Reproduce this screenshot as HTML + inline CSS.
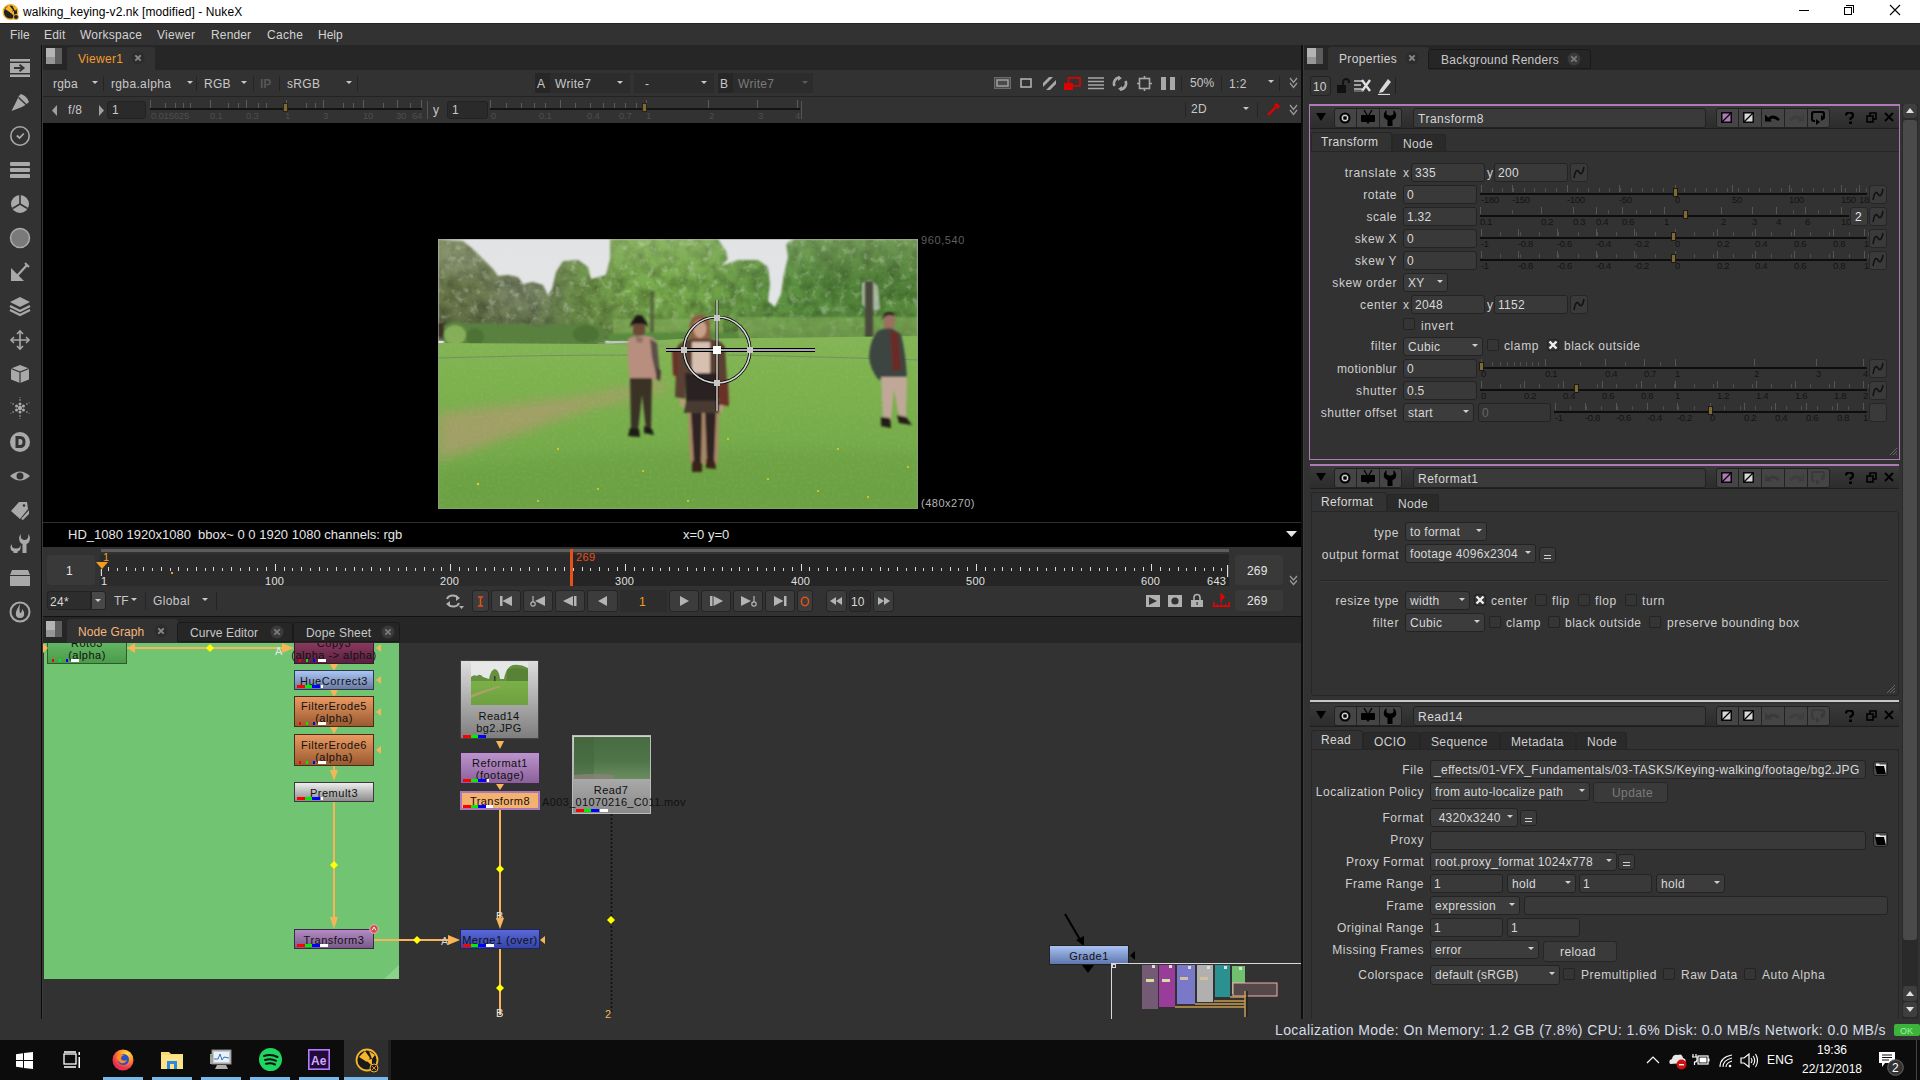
<!DOCTYPE html>
<html><head><meta charset="utf-8">
<style>
*{margin:0;padding:0;box-sizing:border-box}
html,body{width:1920px;height:1080px;overflow:hidden;background:#323232;font-family:"Liberation Sans",sans-serif;font-size:12px;color:#c8c8c8;position:relative}
.a{position:absolute}
.t{position:absolute;white-space:nowrap}
</style></head><body>
<div class="a" style="left:0px;top:0px;width:1920px;height:23px;background:#ffffff;"></div>
<svg class="a" style="left:2px;top:2px;" width="17" height="18" viewBox="0 0 17 18"><circle cx="8.5" cy="10" r="7.3" fill="#222" stroke="#f5b52e" stroke-width="1.4"/><path d="M3 7 L7 3 L11 8 L9 11 Z" fill="#f5b52e"/><path d="M10 3 L15 6 L13 9 Z" fill="#f5b52e"/><path d="M8 10 L12 9 L12 14 Z" fill="#f5b52e"/><circle cx="14" cy="15" r="2.5" fill="#222" stroke="#f5b52e" stroke-width="1"/></svg>
<div class="t" style="left:23px;top:6px;font-size:12px;line-height:12px;color:#000;letter-spacing:0.08px;">walking_keying-v2.nk [modified] - NukeX</div>
<div class="a" style="left:1799px;top:10px;width:10px;height:1px;background:#000;"></div>
<div class="a" style="left:1844px;top:7px;width:8px;height:8px;background:none;border:1px solid #000"></div>
<div class="a" style="left:1846px;top:5px;width:8px;height:8px;background:none;border-top:1px solid #000;border-right:1px solid #000"></div>
<svg class="a" style="left:1889px;top:4px;" width="12" height="12" viewBox="0 0 12 12"><path d="M1 1 L11 11 M11 1 L1 11" stroke="#000" stroke-width="1.1"/></svg>
<div class="a" style="left:0px;top:23px;width:1920px;height:22px;background:#323232;"></div>
<div class="a" style="left:0px;top:23px;width:1920px;height:1px;background:#232323;"></div>
<div class="t" style="left:10px;top:29px;font-size:12px;line-height:12px;color:#d2d2d2;letter-spacing:0.1px;">File</div>
<div class="t" style="left:44px;top:29px;font-size:12px;line-height:12px;color:#d2d2d2;letter-spacing:0.2px;">Edit</div>
<div class="t" style="left:80px;top:29px;font-size:12px;line-height:12px;color:#d2d2d2;letter-spacing:0.25px;">Workspace</div>
<div class="t" style="left:157px;top:29px;font-size:12px;line-height:12px;color:#d2d2d2;letter-spacing:0.3px;">Viewer</div>
<div class="t" style="left:211px;top:29px;font-size:12px;line-height:12px;color:#d2d2d2;letter-spacing:0.15px;">Render</div>
<div class="t" style="left:267px;top:29px;font-size:12px;line-height:12px;color:#d2d2d2;letter-spacing:0.3px;">Cache</div>
<div class="t" style="left:318px;top:29px;font-size:12px;line-height:12px;color:#d2d2d2;letter-spacing:0px;">Help</div>
<div class="a" style="left:0px;top:45px;width:41px;height:974px;background:#323232;"></div>
<div class="a" style="left:41px;top:45px;width:1px;height:974px;background:#0a0a0a;"></div>
<div class="a" style="left:42px;top:45px;width:1px;height:974px;background:#3a3a3a;"></div>
<svg class="a" style="left:8px;top:56px;" width="24" height="24" viewBox="0 0 24 24"><rect x="2" y="3" width="20" height="2.5" fill="#a9a9a9"/><rect x="2" y="7" width="20" height="10" fill="#a9a9a9"/><rect x="2" y="18.5" width="20" height="2.5" fill="#a9a9a9"/><path d="M6 12 H15 M11.5 8.8 L15.5 12 L11.5 15.2" stroke="#333" stroke-width="2" fill="none"/></svg>
<svg class="a" style="left:8px;top:90px;" width="24" height="24" viewBox="0 0 24 24"><path d="M3.5 21 L9 10 Q11 5 13 4 Q19 6 21 12 Q18 15 14 17 Z" fill="#a9a9a9"/><path d="M10.5 7.5 L18.5 15" stroke="#333" stroke-width="1.4"/></svg>
<svg class="a" style="left:8px;top:124px;" width="24" height="24" viewBox="0 0 24 24"><circle cx="12" cy="12" r="9.2" fill="none" stroke="#a9a9a9" stroke-width="1.6"/><path d="M8.8 11.5 L11.5 14 L15.8 9.5" stroke="#a9a9a9" stroke-width="1.8" fill="none"/></svg>
<svg class="a" style="left:8px;top:158px;" width="24" height="24" viewBox="0 0 24 24"><rect x="2" y="4" width="20" height="4" rx="1" fill="#a9a9a9"/><rect x="2" y="10" width="20" height="4" rx="1" fill="#a9a9a9"/><rect x="2" y="16" width="20" height="4" rx="1" fill="#a9a9a9"/></svg>
<svg class="a" style="left:8px;top:192px;" width="24" height="24" viewBox="0 0 24 24"><circle cx="12" cy="12" r="9" fill="#a9a9a9"/><path d="M12 3 V12 L4.5 16.5 M12 12 L19.5 16.5" stroke="#333" stroke-width="1.6" fill="none"/></svg>
<svg class="a" style="left:8px;top:226px;" width="24" height="24" viewBox="0 0 24 24"><circle cx="12" cy="12" r="9.5" fill="#7a7a7a" stroke="#a9a9a9" stroke-width="1.5"/></svg>
<svg class="a" style="left:8px;top:260px;" width="24" height="24" viewBox="0 0 24 24"><path d="M3 21 L3 8 L16 21 Z" fill="#a9a9a9"/><path d="M8 17 L19 5" stroke="#a9a9a9" stroke-width="2.2"/><path d="M17 3 L21 7" stroke="#a9a9a9" stroke-width="2"/></svg>
<svg class="a" style="left:8px;top:294px;" width="24" height="24" viewBox="0 0 24 24"><path d="M2 8 L12 3 L22 8 L12 13 Z" fill="#a9a9a9"/><path d="M2 12 L12 17 L22 12" stroke="#a9a9a9" stroke-width="2.2" fill="none"/><path d="M2 16 L12 21 L22 16" stroke="#a9a9a9" stroke-width="2.2" fill="none"/></svg>
<svg class="a" style="left:8px;top:328px;" width="24" height="24" viewBox="0 0 24 24"><path d="M12 3 V21 M3 12 H21" stroke="#a9a9a9" stroke-width="1.6"/><path d="M9 6 L12 3 L15 6 M9 18 L12 21 L15 18 M6 9 L3 12 L6 15 M18 9 L21 12 L18 15" stroke="#a9a9a9" stroke-width="1.6" fill="none"/></svg>
<svg class="a" style="left:8px;top:362px;" width="24" height="24" viewBox="0 0 24 24"><path d="M3 6.5 L12 3 L21 6.5 L21 17.5 L12 21 L3 17.5 Z" fill="#a9a9a9"/><path d="M3 6.5 L12 10 L21 6.5 M12 10 V21" stroke="#333" stroke-width="1.2" fill="none"/></svg>
<svg class="a" style="left:8px;top:396px;" width="24" height="24" viewBox="0 0 24 24"><circle cx="12" cy="12" r="2.2" fill="#a9a9a9"/><circle cx="12.00" cy="16.00" r="1.5" fill="#a9a9a9"/><circle cx="12.00" cy="20.00" r="0.8" fill="#a9a9a9"/><circle cx="12.00" cy="22.50" r="0.6" fill="#a9a9a9" opacity="0.7"/><circle cx="8.54" cy="14.00" r="1.5" fill="#a9a9a9"/><circle cx="5.07" cy="16.00" r="0.8" fill="#a9a9a9"/><circle cx="2.91" cy="17.25" r="0.6" fill="#a9a9a9" opacity="0.7"/><circle cx="8.54" cy="10.00" r="1.5" fill="#a9a9a9"/><circle cx="5.07" cy="8.00" r="0.8" fill="#a9a9a9"/><circle cx="2.91" cy="6.75" r="0.6" fill="#a9a9a9" opacity="0.7"/><circle cx="12.00" cy="8.00" r="1.5" fill="#a9a9a9"/><circle cx="12.00" cy="4.00" r="0.8" fill="#a9a9a9"/><circle cx="12.00" cy="1.50" r="0.6" fill="#a9a9a9" opacity="0.7"/><circle cx="15.46" cy="10.00" r="1.5" fill="#a9a9a9"/><circle cx="18.93" cy="8.00" r="0.8" fill="#a9a9a9"/><circle cx="21.09" cy="6.75" r="0.6" fill="#a9a9a9" opacity="0.7"/><circle cx="15.46" cy="14.00" r="1.5" fill="#a9a9a9"/><circle cx="18.93" cy="16.00" r="0.8" fill="#a9a9a9"/><circle cx="21.09" cy="17.25" r="0.6" fill="#a9a9a9" opacity="0.7"/></svg>
<svg class="a" style="left:8px;top:430px;" width="24" height="24" viewBox="0 0 24 24"><circle cx="12" cy="12" r="10" fill="#a9a9a9"/><path d="M7.5 6 H12 Q17.5 6 17.5 12 Q17.5 18 12 18 H7.5 Z" fill="#333"/><path d="M10.5 9 H12 Q14.5 9 14.5 12 Q14.5 15 12 15 H10.5 Z" fill="#a9a9a9"/></svg>
<svg class="a" style="left:8px;top:464px;" width="24" height="24" viewBox="0 0 24 24"><path d="M2 12 Q12 3 22 12 Q12 21 2 12 Z" fill="#a9a9a9"/><circle cx="12" cy="12" r="3.5" fill="#333"/></svg>
<svg class="a" style="left:8px;top:498px;" width="24" height="24" viewBox="0 0 24 24"><path d="M3 13 L11 4 L19 4 L20 11 L12 21 Z" fill="#a9a9a9"/><path d="M13 21 L21 12 L21 16 L15 22 Z" fill="#a9a9a9"/><circle cx="16" cy="7.5" r="1.3" fill="#333"/></svg>
<svg class="a" style="left:8px;top:532px;" width="24" height="24" viewBox="0 0 24 24"><path d="M12.5 2 Q10 6 12 10 Q13.5 12 14.5 12 L14.5 21 L18.5 21 L18.5 12 Q19.5 12 21 10 Q23 6 20.5 2 L20 6 Q19 8 16.5 8 Q14 8 13 6 Z" fill="#a9a9a9"/><path d="M3.5 12 Q1.5 15 3 18 Q4 19 5.5 19.5 L5.5 21 L9.5 21 L9.5 19.5 Q11 19 12 18 Q13 16 12.5 13 L11.5 15.5 Q10.5 16.5 8 16.5 Q5 16.5 4.2 15 Z" fill="#a9a9a9"/></svg>
<svg class="a" style="left:8px;top:566px;" width="24" height="24" viewBox="0 0 24 24"><path d="M4 4 H20 L22 9 H2 Z" fill="#a9a9a9"/><rect x="2" y="10" width="20" height="10" fill="#a9a9a9"/></svg>
<svg class="a" style="left:8px;top:600px;" width="24" height="24" viewBox="0 0 24 24"><circle cx="12" cy="12" r="9.5" fill="none" stroke="#a9a9a9" stroke-width="2"/><path d="M12 4 Q9 9 8 12 Q7 18 12 18 Q17 18 16 12 Q15 10 14 9 Q14 13 12 13 Q11 10 12 4 Z" fill="#a9a9a9"/></svg>
<div class="a" style="left:43px;top:45px;width:1258px;height:25px;background:#262626;"></div>
<div class="a" style="left:46px;top:48px;width:9px;height:9px;background:#b4b4b4;"></div>
<div class="a" style="left:46px;top:57px;width:9px;height:7px;background:#969696;"></div>
<div class="a" style="left:55px;top:48px;width:7px;height:16px;background:#5c5c5c;"></div>
<div class="a" style="left:67px;top:47px;width:88px;height:23px;background:#323232;border-radius:3px 3px 0 0"></div>
<div class="t" style="left:78px;top:53px;font-size:12px;line-height:12px;color:#f39c2b;letter-spacing:0.3px;">Viewer1</div>
<svg class="a" style="left:131px;top:51px;" width="14" height="14" viewBox="0 0 14 14"><circle cx="7" cy="7" r="6.5" fill="#2c2c2c"/><path d="M4.3 4.3 L9.7 9.7 M9.7 4.3 L4.3 9.7" stroke="#8a8a8a" stroke-width="1.8"/></svg>
<div class="a" style="left:43px;top:70px;width:1258px;height:26px;background:#323232;"></div>
<div class="a" style="left:43px;top:96px;width:1258px;height:1px;background:#232323;"></div>
<div class="t" style="left:53px;top:78px;font-size:12px;line-height:12px;color:#c8c8c8;letter-spacing:0.2px;">rgba</div>
<svg class="a" style="left:92px;top:81px;" width="6" height="3" viewBox="0 0 6 3"><path d="M0 0 H6 L3.0 3 Z" fill="#c8c8c8"/></svg>
<div class="a" style="left:103px;top:76px;width:1px;height:15px;background:#242424;"></div>
<div class="t" style="left:111px;top:78px;font-size:12px;line-height:12px;color:#c8c8c8;letter-spacing:0.35px;">rgba.alpha</div>
<svg class="a" style="left:187px;top:81px;" width="6" height="3" viewBox="0 0 6 3"><path d="M0 0 H6 L3.0 3 Z" fill="#c8c8c8"/></svg>
<div class="a" style="left:196px;top:76px;width:1px;height:15px;background:#242424;"></div>
<div class="t" style="left:204px;top:78px;font-size:12px;line-height:12px;color:#c8c8c8;letter-spacing:0.3px;">RGB</div>
<svg class="a" style="left:241px;top:81px;" width="6" height="3" viewBox="0 0 6 3"><path d="M0 0 H6 L3.0 3 Z" fill="#c8c8c8"/></svg>
<div class="a" style="left:253px;top:76px;width:1px;height:15px;background:#242424;"></div>
<div class="t" style="left:260px;top:78px;font-size:12px;line-height:12px;color:#555555;letter-spacing:0px;font-weight:bold;">IP</div>
<div class="a" style="left:279px;top:76px;width:1px;height:15px;background:#242424;"></div>
<div class="t" style="left:287px;top:78px;font-size:12px;line-height:12px;color:#c8c8c8;letter-spacing:0.3px;">sRGB</div>
<svg class="a" style="left:346px;top:81px;" width="6" height="3" viewBox="0 0 6 3"><path d="M0 0 H6 L3.0 3 Z" fill="#c8c8c8"/></svg>
<div class="a" style="left:357px;top:76px;width:1px;height:15px;background:#242424;"></div>
<div class="a" style="left:535px;top:73px;width:15px;height:20px;background:#262626;"></div>
<div class="t" style="left:537px;top:78px;font-size:12px;line-height:12px;color:#c8c8c8;letter-spacing:0px;">A</div>
<div class="a" style="left:550px;top:73px;width:80px;height:20px;background:#2c2c2c;"></div>
<div class="t" style="left:555px;top:78px;font-size:12px;line-height:12px;color:#c8c8c8;letter-spacing:0.3px;">Write7</div>
<svg class="a" style="left:617px;top:81px;" width="6" height="3" viewBox="0 0 6 3"><path d="M0 0 H6 L3.0 3 Z" fill="#c8c8c8"/></svg>
<div class="a" style="left:634px;top:73px;width:80px;height:20px;background:#2c2c2c;"></div>
<div class="t" style="left:645px;top:78px;font-size:12px;line-height:12px;color:#c8c8c8;letter-spacing:0px;">-</div>
<svg class="a" style="left:701px;top:81px;" width="6" height="3" viewBox="0 0 6 3"><path d="M0 0 H6 L3.0 3 Z" fill="#c8c8c8"/></svg>
<div class="a" style="left:718px;top:73px;width:15px;height:20px;background:#262626;"></div>
<div class="t" style="left:720px;top:78px;font-size:12px;line-height:12px;color:#c8c8c8;letter-spacing:0px;">B</div>
<div class="a" style="left:733px;top:73px;width:80px;height:20px;background:#2c2c2c;"></div>
<div class="t" style="left:738px;top:78px;font-size:12px;line-height:12px;color:#7a7a7a;letter-spacing:0.3px;">Write7</div>
<svg class="a" style="left:802px;top:81px;" width="6" height="3" viewBox="0 0 6 3"><path d="M0 0 H6 L3.0 3 Z" fill="#5a5a5a"/></svg>
<svg class="a" style="left:994px;top:77px;" width="17" height="12" viewBox="0 0 17 12"><rect x="0.5" y="0.5" width="16" height="11" fill="#4a4a4a" stroke="#6a6a6a"/><rect x="3" y="3" width="11" height="6" fill="none" stroke="#a0a0a0" stroke-width="1.5"/></svg>
<svg class="a" style="left:1020px;top:78px;" width="12" height="10" viewBox="0 0 12 10"><rect x="1" y="1" width="10" height="8" fill="none" stroke="#b0b0b0" stroke-width="1.6"/></svg>
<svg class="a" style="left:1043px;top:77px;" width="14" height="13" viewBox="0 0 14 13"><path d="M0 6 L6 0 L10 0 L0 10 Z M3 13 L13 3 L13 7 L7 13 Z" fill="#a8a8a8"/></svg>
<svg class="a" style="left:1064px;top:77px;" width="17" height="13" viewBox="0 0 17 13"><rect x="4.5" y="0.8" width="11.5" height="8" fill="none" stroke="#e00000" stroke-width="1.6"/><rect x="0" y="6" width="9" height="7" fill="#e00000"/></svg>
<svg class="a" style="left:1088px;top:77px;" width="16" height="13" viewBox="0 0 16 13"><path d="M0 1 H16 M0 4.5 H16 M0 8 H16 M0 11.5 H16" stroke="#a8a8a8" stroke-width="1.6"/></svg>
<svg class="a" style="left:1112px;top:76px;" width="16" height="15" viewBox="0 0 16 15"><path d="M8 1.5 A6 6 0 0 0 2.5 10 M8 13.5 A6 6 0 0 0 13.5 5" stroke="#a8a8a8" stroke-width="2.6" fill="none"/><path d="M6 0 L10 2 L6 5 Z M10 15 L6 13 L10 10 Z" fill="#a8a8a8"/></svg>
<svg class="a" style="left:1137px;top:76px;" width="15" height="15" viewBox="0 0 15 15"><rect x="2.5" y="2.5" width="10" height="10" fill="none" stroke="#a8a8a8" stroke-width="1.6"/><path d="M7.5 0 V3 M7.5 12 V15 M0 7.5 H3 M12 7.5 H15" stroke="#a8a8a8" stroke-width="1.6"/></svg>
<div class="a" style="left:1161px;top:77px;width:5px;height:13px;background:#a8a8a8;"></div>
<div class="a" style="left:1170px;top:77px;width:5px;height:13px;background:#a8a8a8;"></div>
<div class="a" style="left:1181px;top:76px;width:1px;height:15px;background:#242424;"></div>
<div class="t" style="left:1190px;top:77px;font-size:12px;line-height:12px;color:#c8c8c8;letter-spacing:0.1px;">50%</div>
<div class="a" style="left:1221px;top:76px;width:1px;height:15px;background:#242424;"></div>
<div class="t" style="left:1229px;top:78px;font-size:12px;line-height:12px;color:#c8c8c8;letter-spacing:0.4px;">1:2</div>
<svg class="a" style="left:1268px;top:80px;" width="6" height="3" viewBox="0 0 6 3"><path d="M0 0 H6 L3.0 3 Z" fill="#c8c8c8"/></svg>
<div class="a" style="left:1279px;top:76px;width:1px;height:15px;background:#242424;"></div>
<svg class="a" style="left:1289px;top:77px;" width="9" height="13" viewBox="0 0 9 13"><path d="M1 1 L4.5 5.5 L8 1 M1 6 L4.5 10.5 L8 6" stroke="#9a9a9a" stroke-width="1.3" fill="none"/></svg>
<div class="a" style="left:43px;top:97px;width:1258px;height:26px;background:#323232;"></div>
<svg class="a" style="left:52px;top:105px;" width="5" height="11" viewBox="0 0 5 11"><path d="M5 0 V11 L0 5.5 Z" fill="#a0a0a0"/></svg>
<div class="t" style="left:68px;top:104px;font-size:12px;line-height:12px;color:#c8c8c8;letter-spacing:0.3px;">f/8</div>
<svg class="a" style="left:99px;top:105px;" width="5" height="11" viewBox="0 0 5 11"><path d="M0 0 V11 L5 5.5 Z" fill="#a0a0a0"/></svg>
<div class="a" style="left:107px;top:101px;width:39px;height:18px;background:#2a2a2a;border:1px solid #222;border-radius:3px"></div>
<div class="t" style="left:112px;top:104px;font-size:12px;line-height:12px;color:#c8c8c8;letter-spacing:0px;">1</div>
<div class="a" style="left:150px;top:108px;width:272px;height:2px;background:#141414;"></div>
<svg class="a" style="left:150px;top:100px;" width="273" height="8" viewBox="0 0 273 8"><rect x="0" y="0" width="1" height="8" fill="#5a5a5a"/><rect x="15" y="3" width="1" height="5" fill="#5a5a5a"/><rect x="25" y="3" width="1" height="5" fill="#5a5a5a"/><rect x="33" y="3" width="1" height="5" fill="#5a5a5a"/><rect x="40" y="3" width="1" height="5" fill="#5a5a5a"/><rect x="60" y="0" width="1" height="8" fill="#5a5a5a"/><rect x="78" y="3" width="1" height="5" fill="#5a5a5a"/><rect x="88" y="3" width="1" height="5" fill="#5a5a5a"/><rect x="96" y="0" width="1" height="8" fill="#5a5a5a"/><rect x="108" y="3" width="1" height="5" fill="#5a5a5a"/><rect x="116" y="3" width="1" height="5" fill="#5a5a5a"/><rect x="136" y="0" width="1" height="8" fill="#5a5a5a"/><rect x="156" y="3" width="1" height="5" fill="#5a5a5a"/><rect x="165" y="3" width="1" height="5" fill="#5a5a5a"/><rect x="173" y="0" width="1" height="8" fill="#5a5a5a"/><rect x="193" y="3" width="1" height="5" fill="#5a5a5a"/><rect x="203" y="3" width="1" height="5" fill="#5a5a5a"/><rect x="213" y="0" width="1" height="8" fill="#5a5a5a"/><rect x="233" y="3" width="1" height="5" fill="#5a5a5a"/><rect x="247" y="0" width="1" height="8" fill="#5a5a5a"/><rect x="260" y="3" width="1" height="5" fill="#5a5a5a"/><rect x="271" y="0" width="1" height="8" fill="#5a5a5a"/></svg>
<div class="t" style="left:151px;top:111px;font-size:9.5px;line-height:9.5px;color:#4e4e4e;letter-spacing:-0.2px;">0.015625</div>
<div class="t" style="left:210px;top:111px;font-size:9.5px;line-height:9.5px;color:#4e4e4e;letter-spacing:-0.2px;">0.1</div>
<div class="t" style="left:246px;top:111px;font-size:9.5px;line-height:9.5px;color:#4e4e4e;letter-spacing:-0.2px;">0.3</div>
<div class="t" style="left:285px;top:111px;font-size:9.5px;line-height:9.5px;color:#4e4e4e;letter-spacing:-0.2px;">1</div>
<div class="t" style="left:323px;top:111px;font-size:9.5px;line-height:9.5px;color:#4e4e4e;letter-spacing:-0.2px;">3</div>
<div class="t" style="left:363px;top:111px;font-size:9.5px;line-height:9.5px;color:#4e4e4e;letter-spacing:-0.2px;">10</div>
<div class="t" style="left:396px;top:111px;font-size:9.5px;line-height:9.5px;color:#4e4e4e;letter-spacing:-0.2px;">30</div>
<div class="t" style="left:412px;top:111px;font-size:9.5px;line-height:9.5px;color:#4e4e4e;letter-spacing:-0.2px;">64</div>
<div class="a" style="left:283px;top:103px;width:5px;height:9px;background:#7d6a35;border:1px solid #2a2416"></div>
<div class="a" style="left:427px;top:101px;width:1px;height:18px;background:#555;"></div>
<div class="t" style="left:433px;top:104px;font-size:12px;line-height:12px;color:#c8c8c8;letter-spacing:0px;">y</div>
<div class="a" style="left:447px;top:101px;width:41px;height:18px;background:#2a2a2a;border:1px solid #222;border-radius:3px"></div>
<div class="t" style="left:452px;top:104px;font-size:12px;line-height:12px;color:#c8c8c8;letter-spacing:0px;">1</div>
<div class="a" style="left:490px;top:108px;width:310px;height:2px;background:#141414;"></div>
<svg class="a" style="left:490px;top:100px;" width="311" height="8" viewBox="0 0 311 8"><rect x="0" y="0" width="1" height="8" fill="#5a5a5a"/><rect x="16" y="3" width="1" height="5" fill="#5a5a5a"/><rect x="31" y="3" width="1" height="5" fill="#5a5a5a"/><rect x="44" y="3" width="1" height="5" fill="#5a5a5a"/><rect x="55" y="3" width="1" height="5" fill="#5a5a5a"/><rect x="70" y="0" width="1" height="8" fill="#5a5a5a"/><rect x="85" y="3" width="1" height="5" fill="#5a5a5a"/><rect x="100" y="3" width="1" height="5" fill="#5a5a5a"/><rect x="113" y="3" width="1" height="5" fill="#5a5a5a"/><rect x="124" y="3" width="1" height="5" fill="#5a5a5a"/><rect x="135" y="3" width="1" height="5" fill="#5a5a5a"/><rect x="146" y="3" width="1" height="5" fill="#5a5a5a"/><rect x="156" y="0" width="1" height="8" fill="#5a5a5a"/><rect x="218" y="0" width="1" height="8" fill="#5a5a5a"/><rect x="267" y="0" width="1" height="8" fill="#5a5a5a"/><rect x="307" y="0" width="1" height="8" fill="#5a5a5a"/></svg>
<div class="t" style="left:491px;top:111px;font-size:9.5px;line-height:9.5px;color:#4e4e4e;letter-spacing:-0.2px;">0</div>
<div class="t" style="left:539px;top:111px;font-size:9.5px;line-height:9.5px;color:#4e4e4e;letter-spacing:-0.2px;">0.1</div>
<div class="t" style="left:587px;top:111px;font-size:9.5px;line-height:9.5px;color:#4e4e4e;letter-spacing:-0.2px;">0.4</div>
<div class="t" style="left:619px;top:111px;font-size:9.5px;line-height:9.5px;color:#4e4e4e;letter-spacing:-0.2px;">0.7</div>
<div class="t" style="left:646px;top:111px;font-size:9.5px;line-height:9.5px;color:#4e4e4e;letter-spacing:-0.2px;">1</div>
<div class="t" style="left:709px;top:111px;font-size:9.5px;line-height:9.5px;color:#4e4e4e;letter-spacing:-0.2px;">2</div>
<div class="t" style="left:758px;top:111px;font-size:9.5px;line-height:9.5px;color:#4e4e4e;letter-spacing:-0.2px;">3</div>
<div class="t" style="left:795px;top:111px;font-size:9.5px;line-height:9.5px;color:#4e4e4e;letter-spacing:-0.2px;">4</div>
<div class="a" style="left:642px;top:103px;width:5px;height:9px;background:#7d6a35;border:1px solid #2a2416"></div>
<div class="a" style="left:801px;top:101px;width:1px;height:18px;background:#555;"></div>
<div class="a" style="left:1185px;top:102px;width:1px;height:15px;background:#242424;"></div>
<div class="t" style="left:1191px;top:103px;font-size:12px;line-height:12px;color:#c8c8c8;letter-spacing:0.3px;">2D</div>
<svg class="a" style="left:1243px;top:107px;" width="6" height="3" viewBox="0 0 6 3"><path d="M0 0 H6 L3.0 3 Z" fill="#c8c8c8"/></svg>
<div class="a" style="left:1257px;top:102px;width:1px;height:15px;background:#242424;"></div>
<svg class="a" style="left:1267px;top:103px;" width="13" height="13" viewBox="0 0 13 13"><path d="M1 12 L9 4" stroke="#e00000" stroke-width="2.4"/><path d="M7 2 L11 6 L13 3 L10 0 Z" fill="#e00000"/></svg>
<svg class="a" style="left:1289px;top:104px;" width="9" height="13" viewBox="0 0 9 13"><path d="M1 1 L4.5 5.5 L8 1 M1 6 L4.5 10.5 L8 6" stroke="#9a9a9a" stroke-width="1.3" fill="none"/></svg>
<div class="a" style="left:43px;top:123px;width:1258px;height:424px;background:#000000;"></div>
<div class="a" style="left:43px;top:522px;width:1258px;height:1px;background:#2e2e2e;"></div>
<svg class="a" style="left:438px;top:239px;" width="480" height="270" viewBox="0 0 480 270"><defs>
<filter id="b1" x="-5%" y="-5%" width="110%" height="110%"><feGaussianBlur stdDeviation="1.2"/></filter>
<filter id="b2" x="-20%" y="-20%" width="140%" height="140%"><feGaussianBlur stdDeviation="1"/></filter>
<filter id="b3" x="-50%" y="-50%" width="200%" height="200%"><feGaussianBlur stdDeviation="6"/></filter>
<filter id="tex" x="0" y="0" width="100%" height="100%"><feTurbulence type="fractalNoise" baseFrequency="0.08" numOctaves="3" seed="3"/><feColorMatrix type="matrix" values="0 0 0 0 0  0 0 0 0 0  0 0 0 0 0  0 0 0 -1.6 1.05"/></filter>
<filter id="tex2" x="0" y="0" width="100%" height="100%"><feTurbulence type="fractalNoise" baseFrequency="0.35" numOctaves="1" seed="7"/><feColorMatrix type="matrix" values="0 0 0 0 1  0 0 0 0 1  0 0 0 0 0.8  0 0 0 -1.2 0.62"/></filter>
<filter id="tex3" x="0" y="0" width="100%" height="100%"><feTurbulence type="fractalNoise" baseFrequency="0.12" numOctaves="3" seed="11"/><feColorMatrix type="matrix" values="0 0 0 0 0.86  0 0 0 0 0.88  0 0 0 0 0.84  0 0 0 2.4 -1.3"/></filter>
<linearGradient id="tshade" x1="0" y1="0" x2="0" y2="1"><stop offset="0" stop-color="#c8d8a8" stop-opacity="0.25"/><stop offset="0.45" stop-color="#c8d8a8" stop-opacity="0"/><stop offset="0.7" stop-color="#1a2a10" stop-opacity="0"/><stop offset="1" stop-color="#1a2a10" stop-opacity="0.3"/></linearGradient>
<linearGradient id="sky" x1="0" y1="0" x2="0" y2="1"><stop offset="0" stop-color="#e2e3e5"/><stop offset="1" stop-color="#e8e9ea"/></linearGradient>
<linearGradient id="trees" x1="0" y1="0" x2="1" y2="0"><stop offset="0" stop-color="#667446"/><stop offset="0.2" stop-color="#72825a"/><stop offset="0.3" stop-color="#6c9048"/><stop offset="0.45" stop-color="#78a84c"/><stop offset="0.6" stop-color="#6a9c46"/><stop offset="0.75" stop-color="#5a8e40"/><stop offset="1" stop-color="#5a8c3e"/></linearGradient>
<linearGradient id="grass" x1="0" y1="0" x2="0" y2="1"><stop offset="0" stop-color="#84b456"/><stop offset="0.25" stop-color="#7db24e"/><stop offset="1" stop-color="#6ea446"/></linearGradient>
<mask id="tc" maskUnits="userSpaceOnUse" x="0" y="0" width="480" height="270"><path filter="url(#b1)" fill="#fff" d="M0 0 L25 2 L35 10 L45 20 L55 30 L60 37 L70 36 L80 38 L85 45 L95 43 L105 46 L110 56 L114 50 L118 33 L125 22 L140 21 L150 28 L153 40 L160 38 L168 36 L172 20 L172 0 L280 0 L288 12 L290 20 L283 27 L300 21 L320 21 L330 28 L332 45 L330 62 L337 68 L343 55 L346 35 L350 18 L348 5 L355 0 L480 0 L480 102 L0 102 Z"/></mask>
</defs>
<rect width="480" height="270" fill="url(#sky)"/>
<g mask="url(#tc)">
<rect width="480" height="102" fill="url(#trees)"/>
<path d="M0 0 L30 0 L50 25 L30 40 L0 35 Z" fill="#8a9274" opacity="0.55" filter="url(#b3)"/>
<path d="M55 35 L110 40 L110 70 L55 70 Z" fill="#7e8870" opacity="0.5" filter="url(#b3)"/>
<path d="M175 0 L280 0 L280 60 L175 60 Z" fill="#7ab04e" opacity="0.45" filter="url(#b3)"/>
<path d="M380 0 L480 0 L480 50 L380 50 Z" fill="#4e7c34" opacity="0.6" filter="url(#b3)"/>
<rect width="480" height="102" fill="#243818" filter="url(#tex)" opacity="0.3"/>
<rect width="480" height="102" filter="url(#tex3)" opacity="0.4"/>
<rect width="480" height="102" fill="url(#tshade)"/>
<g fill="#8cb860" opacity="0.55" filter="url(#b1)"><rect x="300" y="78" width="180" height="22"/><rect x="175" y="80" width="110" height="20"/></g>

</g>
<path d="M424 44 L433 41 L440 47 L442 70 L436 72 L424 66 Z" fill="#c8ccc8" opacity="0.7" filter="url(#b1)"/>
<g filter="url(#b2)">
<rect x="427" y="42" width="8" height="58" fill="#4a4a3a"/>

<rect x="212" y="52" width="4" height="48" fill="#4a5038" opacity="0.7"/>

<rect x="0" y="84" width="8" height="14" fill="#3a3028"/>
<path d="M6 86 Q18 80 30 85 Q45 82 60 86 Q80 82 100 87 Q130 82 165 88 L168 107 L6 107 Z" fill="#5a8040"/>
<ellipse cx="17" cy="96" rx="11" ry="10" fill="#86ae58"/>
<ellipse cx="37" cy="98" rx="9" ry="9" fill="#4e7234"/>
<ellipse cx="55" cy="96" rx="8" ry="8" fill="#5a8040"/>
<ellipse cx="148" cy="95" rx="13" ry="9" fill="#4e7234"/>
<path d="M170 95 Q230 92 300 94 L300 102 L170 102 Z" fill="#5a8a40"/>
</g>
<path d="M0 104 L165 105 L240 100 L480 97 L480 270 L0 270 Z" fill="url(#grass)"/>
<path d="M160 103 Q200 104 230 106 L236 108 Q200 107 160 105 Z" fill="#8a9a80" opacity="0.5"/>
<path d="M0 119 Q100 116 190 116 M290 116 Q400 118 480 121" stroke="#72866a" stroke-width="1.2" fill="none" opacity="0.8"/>
<path d="M0 174 Q80 165 150 156 Q190 148 225 141 L230 150 Q190 160 150 170 Q80 195 0 222 Z" fill="#a89d6a" filter="url(#b3)" opacity="0.85"/>
<path d="M0 230 Q240 200 480 215 L480 270 L0 270 Z" fill="#679c40" opacity="0.45" filter="url(#b3)"/>
<rect x="0" y="100" width="480" height="170" filter="url(#tex2)" opacity="0.12"/>
<g filter="url(#b2)">
<!-- left man -->
<path d="M190 100 Q196 96 204 97 Q214 96 218 102 L221 140 Q206 144 192 141 Q189 120 190 100 Z" fill="#b88e7e"/>
<path d="M197 97 L205 99 L204 104 L199 103 Z" fill="#8a7060"/>
<path d="M212 100 L219 104 L222 136 L219 140 L214 118 Z" fill="#5a5048"/>
<path d="M219 128 L223 132 L222 142 L218 140 Z" fill="#4a3a30"/>
<path d="M195 84 Q195 78 201 78 Q207 78 207 84 L207 95 Q201 99 195 95 Z" fill="#6a4a38"/>
<path d="M192 88 Q193 79 201 78 Q209 79 210 88 L206 85 L196 85 Z" fill="#1a1816"/>
<path d="M195 85 Q195 76 201 76 Q207 76 207 85 Z" fill="#1a1816"/>
<path d="M192 139 L214 139 L213 190 L208 190 L204 156 L200 192 L193 192 Z" fill="#3a3028"/>
<path d="M192 189 L201 190 L202 198 L190 197 Z M206 187 L214 190 L216 196 L206 194 Z" fill="#1e1a18"/>
<!-- woman -->
<path d="M252 90 Q251 76 262 75 Q273 76 272 90 L274 112 L250 112 Z" fill="#8a6042"/>
<ellipse cx="262" cy="90" rx="6.5" ry="9" fill="#c8a088"/>
<path d="M239 108 Q246 99 255 100 L269 100 Q282 99 287 108 L290 158 L279 160 L277 134 L248 134 L247 160 L237 158 Z" fill="#5a4030"/>
<rect x="254" y="103" width="18" height="31" fill="#d8c0b0"/>
<path d="M234 112 L240 110 L240 138 L235 136 Z" fill="#6a3028"/>
<path d="M280 140 L290 142 L291 167 L281 166 Z" fill="#6a3028"/>
<path d="M247 134 L280 134 L280 164 L282 174 L246 174 L248 164 Z" fill="#2a2220"/>
<path d="M248 162 L281 162 L282 174 L247 174 Z" fill="#4a3a32"/>
<path d="M250 174 L281 174 L280 224 L252 224 Z" fill="#a88868"/>
<path d="M253 174 L264 174 L263 226 L256 226 Z" fill="#2e2420"/>
<path d="M267 174 L278 174 L276 224 L269 224 Z" fill="#2e2420"/>
<path d="M254 222 L264 224 L264 233 L254 233 Z M268 220 L277 222 L278 230 L268 229 Z" fill="#3a2018"/>
<path d="M242 160 L247 160 L246 168 L242 167 Z M281 166 L285 166 L284 174 L281 173 Z" fill="#c09880"/>
<!-- right man -->
<path d="M446 78 Q446 74 451 74 Q457 74 457 80 L456 90 Q451 93 446 90 Z" fill="#9a7060"/>
<path d="M444 82 Q444 73 451 73 Q457 73 457 77 L451 76 L446 78 Z" fill="#2a2018"/>
<path d="M440 92 Q448 88 455 90 L463 95 Q468 115 469 140 Q450 146 440 140 Q432 130 431 118 Q432 100 440 92 Z" fill="#3e4440"/>
<path d="M452 92 L460 94 L463 130 L455 133 Z" fill="#6a2a28"/>
<path d="M443 138 L469 138 L468 178 L461 178 L456 150 L453 180 L445 180 Z" fill="#c0a898"/>
<path d="M443 178 L452 179 L453 189 L443 187 Z M459 176 L468 178 L474 186 L461 184 Z" fill="#221a16"/>
</g>
<g fill="#e8d020">
<circle cx="40" cy="245" r="1.2"/><circle cx="100" cy="262" r="1"/><circle cx="160" cy="250" r="1"/><circle cx="205" cy="232" r="1"/><circle cx="330" cy="240" r="1"/><circle cx="380" cy="252" r="1"/><circle cx="400" cy="210" r="1"/><circle cx="120" cy="210" r="1"/><circle cx="290" cy="200" r="1"/><circle cx="430" cy="258" r="1"/><circle cx="250" cy="262" r="1"/><circle cx="470" cy="228" r="1"/>
</g>
<rect x="0.5" y="0.5" width="479" height="269" fill="none" stroke="#9a9a9a" stroke-width="1" stroke-dasharray="1 1"/>
<g>
<path d="M228 111 H377" stroke="#000" stroke-width="4"/>
<path d="M228 111 H377" stroke="#a8a8a8" stroke-width="2"/>
<path d="M279 61 V172" stroke="#000" stroke-width="3" opacity="0.6"/>
<path d="M279 61 V172" stroke="#d8d8d8" stroke-width="1.4"/>
<circle cx="279" cy="111" r="33" fill="none" stroke="#000" stroke-width="3.2"/>
<circle cx="279" cy="111" r="33" fill="none" stroke="#d8d8d8" stroke-width="1.6"/>
<rect x="276" y="76" width="6" height="6" fill="#c8c8c8"/><rect x="243" y="108" width="6" height="6" fill="#c8c8c8"/><rect x="309" y="108" width="6" height="6" fill="#c8c8c8"/><rect x="276" y="141" width="6" height="6" fill="#c8c8c8"/><rect x="275" y="107" width="8" height="8" fill="#ffffff"/>
</g></svg>
<div class="t" style="left:921px;top:235px;font-size:11px;line-height:11px;color:#5e5e5e;letter-spacing:0.6px;">960,540</div>
<div class="t" style="left:921px;top:498px;font-size:11px;line-height:11px;color:#b4b4b4;letter-spacing:0.5px;">(480x270)</div>
<div class="t" style="left:68px;top:528px;font-size:13px;line-height:13px;color:#e6e6e6;letter-spacing:0px;">HD_1080 1920x1080&nbsp; bbox~ 0 0 1920 1080 channels: rgb</div>
<div class="t" style="left:683px;top:528px;font-size:13px;line-height:13px;color:#e6e6e6;letter-spacing:0px;">x=0 y=0</div>
<svg class="a" style="left:1286px;top:531px;" width="11" height="6" viewBox="0 0 11 6"><path d="M0 0 H11 L5.5 6 Z" fill="#e6e6e6"/></svg>
<div class="a" style="left:43px;top:547px;width:1258px;height:70px;background:#323232;"></div>
<div class="a" style="left:101px;top:549px;width:1128px;height:3px;background:#5c5c5c;"></div>
<div class="a" style="left:570px;top:549px;width:3px;height:3px;background:#e8501a;"></div>
<div class="a" style="left:100px;top:554px;width:1129px;height:32px;background:#252525;"></div>
<div class="a" style="left:100px;top:554px;width:471px;height:32px;background:#2b2b2b;"></div>
<div class="a" style="left:47px;top:555px;width:48px;height:30px;background:#393939;border-radius:4px"></div>
<div class="t" style="left:66px;top:565px;font-size:12px;line-height:12px;color:#e6e6e6;letter-spacing:0px;">1</div>
<svg class="a" style="left:100px;top:564px;" width="1130" height="13" viewBox="0 0 1130 13"><rect x="8" y="3" width="1" height="4" fill="#d8d8d8"/><rect x="17" y="4" width="1" height="3" fill="#d0d0d0"/><rect x="26" y="3" width="1" height="4" fill="#d8d8d8"/><rect x="35" y="4" width="1" height="3" fill="#d0d0d0"/><rect x="43" y="3" width="1" height="4" fill="#d8d8d8"/><rect x="52" y="4" width="1" height="3" fill="#d0d0d0"/><rect x="61" y="3" width="1" height="4" fill="#d8d8d8"/><rect x="70" y="4" width="1" height="3" fill="#d0d0d0"/><rect x="78" y="3" width="1" height="4" fill="#d8d8d8"/><rect x="87" y="4" width="1" height="3" fill="#d0d0d0"/><rect x="96" y="3" width="1" height="4" fill="#d8d8d8"/><rect x="105" y="4" width="1" height="3" fill="#d0d0d0"/><rect x="113" y="3" width="1" height="4" fill="#d8d8d8"/><rect x="122" y="4" width="1" height="3" fill="#d0d0d0"/><rect x="131" y="3" width="1" height="4" fill="#d8d8d8"/><rect x="140" y="4" width="1" height="3" fill="#d0d0d0"/><rect x="149" y="3" width="1" height="4" fill="#d8d8d8"/><rect x="157" y="4" width="1" height="3" fill="#d0d0d0"/><rect x="166" y="3" width="1" height="4" fill="#d8d8d8"/><rect x="175" y="0" width="1" height="7" fill="#e0e0e0"/><rect x="184" y="3" width="1" height="4" fill="#d8d8d8"/><rect x="192" y="4" width="1" height="3" fill="#d0d0d0"/><rect x="201" y="3" width="1" height="4" fill="#d8d8d8"/><rect x="210" y="4" width="1" height="3" fill="#d0d0d0"/><rect x="219" y="3" width="1" height="4" fill="#d8d8d8"/><rect x="227" y="4" width="1" height="3" fill="#d0d0d0"/><rect x="236" y="3" width="1" height="4" fill="#d8d8d8"/><rect x="245" y="4" width="1" height="3" fill="#d0d0d0"/><rect x="254" y="3" width="1" height="4" fill="#d8d8d8"/><rect x="262" y="4" width="1" height="3" fill="#d0d0d0"/><rect x="271" y="3" width="1" height="4" fill="#d8d8d8"/><rect x="280" y="4" width="1" height="3" fill="#d0d0d0"/><rect x="289" y="3" width="1" height="4" fill="#d8d8d8"/><rect x="298" y="4" width="1" height="3" fill="#d0d0d0"/><rect x="306" y="3" width="1" height="4" fill="#d8d8d8"/><rect x="315" y="4" width="1" height="3" fill="#d0d0d0"/><rect x="324" y="3" width="1" height="4" fill="#d8d8d8"/><rect x="333" y="4" width="1" height="3" fill="#d0d0d0"/><rect x="341" y="3" width="1" height="4" fill="#d8d8d8"/><rect x="350" y="0" width="1" height="7" fill="#e0e0e0"/><rect x="359" y="3" width="1" height="4" fill="#d8d8d8"/><rect x="368" y="4" width="1" height="3" fill="#d0d0d0"/><rect x="376" y="3" width="1" height="4" fill="#d8d8d8"/><rect x="385" y="4" width="1" height="3" fill="#d0d0d0"/><rect x="394" y="3" width="1" height="4" fill="#d8d8d8"/><rect x="403" y="4" width="1" height="3" fill="#d0d0d0"/><rect x="411" y="3" width="1" height="4" fill="#d8d8d8"/><rect x="420" y="4" width="1" height="3" fill="#d0d0d0"/><rect x="429" y="3" width="1" height="4" fill="#d8d8d8"/><rect x="438" y="4" width="1" height="3" fill="#d0d0d0"/><rect x="447" y="3" width="1" height="4" fill="#d8d8d8"/><rect x="455" y="4" width="1" height="3" fill="#d0d0d0"/><rect x="464" y="3" width="1" height="4" fill="#d8d8d8"/><rect x="473" y="4" width="1" height="3" fill="#d0d0d0"/><rect x="482" y="3" width="1" height="4" fill="#d8d8d8"/><rect x="490" y="4" width="1" height="3" fill="#d0d0d0"/><rect x="499" y="3" width="1" height="4" fill="#d8d8d8"/><rect x="508" y="4" width="1" height="3" fill="#d0d0d0"/><rect x="517" y="3" width="1" height="4" fill="#d8d8d8"/><rect x="525" y="0" width="1" height="7" fill="#e0e0e0"/><rect x="534" y="3" width="1" height="4" fill="#d8d8d8"/><rect x="543" y="4" width="1" height="3" fill="#d0d0d0"/><rect x="552" y="3" width="1" height="4" fill="#d8d8d8"/><rect x="560" y="4" width="1" height="3" fill="#d0d0d0"/><rect x="569" y="3" width="1" height="4" fill="#d8d8d8"/><rect x="578" y="4" width="1" height="3" fill="#d0d0d0"/><rect x="587" y="3" width="1" height="4" fill="#d8d8d8"/><rect x="596" y="4" width="1" height="3" fill="#d0d0d0"/><rect x="604" y="3" width="1" height="4" fill="#d8d8d8"/><rect x="613" y="4" width="1" height="3" fill="#d0d0d0"/><rect x="622" y="3" width="1" height="4" fill="#d8d8d8"/><rect x="631" y="4" width="1" height="3" fill="#d0d0d0"/><rect x="639" y="3" width="1" height="4" fill="#d8d8d8"/><rect x="648" y="4" width="1" height="3" fill="#d0d0d0"/><rect x="657" y="3" width="1" height="4" fill="#d8d8d8"/><rect x="666" y="4" width="1" height="3" fill="#d0d0d0"/><rect x="674" y="3" width="1" height="4" fill="#d8d8d8"/><rect x="683" y="4" width="1" height="3" fill="#d0d0d0"/><rect x="692" y="3" width="1" height="4" fill="#d8d8d8"/><rect x="701" y="0" width="1" height="7" fill="#e0e0e0"/><rect x="709" y="3" width="1" height="4" fill="#d8d8d8"/><rect x="718" y="4" width="1" height="3" fill="#d0d0d0"/><rect x="727" y="3" width="1" height="4" fill="#d8d8d8"/><rect x="736" y="4" width="1" height="3" fill="#d0d0d0"/><rect x="745" y="3" width="1" height="4" fill="#d8d8d8"/><rect x="753" y="4" width="1" height="3" fill="#d0d0d0"/><rect x="762" y="3" width="1" height="4" fill="#d8d8d8"/><rect x="771" y="4" width="1" height="3" fill="#d0d0d0"/><rect x="780" y="3" width="1" height="4" fill="#d8d8d8"/><rect x="788" y="4" width="1" height="3" fill="#d0d0d0"/><rect x="797" y="3" width="1" height="4" fill="#d8d8d8"/><rect x="806" y="4" width="1" height="3" fill="#d0d0d0"/><rect x="815" y="3" width="1" height="4" fill="#d8d8d8"/><rect x="823" y="4" width="1" height="3" fill="#d0d0d0"/><rect x="832" y="3" width="1" height="4" fill="#d8d8d8"/><rect x="841" y="4" width="1" height="3" fill="#d0d0d0"/><rect x="850" y="3" width="1" height="4" fill="#d8d8d8"/><rect x="858" y="4" width="1" height="3" fill="#d0d0d0"/><rect x="867" y="3" width="1" height="4" fill="#d8d8d8"/><rect x="876" y="0" width="1" height="7" fill="#e0e0e0"/><rect x="885" y="3" width="1" height="4" fill="#d8d8d8"/><rect x="894" y="4" width="1" height="3" fill="#d0d0d0"/><rect x="902" y="3" width="1" height="4" fill="#d8d8d8"/><rect x="911" y="4" width="1" height="3" fill="#d0d0d0"/><rect x="920" y="3" width="1" height="4" fill="#d8d8d8"/><rect x="929" y="4" width="1" height="3" fill="#d0d0d0"/><rect x="937" y="3" width="1" height="4" fill="#d8d8d8"/><rect x="946" y="4" width="1" height="3" fill="#d0d0d0"/><rect x="955" y="3" width="1" height="4" fill="#d8d8d8"/><rect x="964" y="4" width="1" height="3" fill="#d0d0d0"/><rect x="972" y="3" width="1" height="4" fill="#d8d8d8"/><rect x="981" y="4" width="1" height="3" fill="#d0d0d0"/><rect x="990" y="3" width="1" height="4" fill="#d8d8d8"/><rect x="999" y="4" width="1" height="3" fill="#d0d0d0"/><rect x="1007" y="3" width="1" height="4" fill="#d8d8d8"/><rect x="1016" y="4" width="1" height="3" fill="#d0d0d0"/><rect x="1025" y="3" width="1" height="4" fill="#d8d8d8"/><rect x="1034" y="4" width="1" height="3" fill="#d0d0d0"/><rect x="1043" y="3" width="1" height="4" fill="#d8d8d8"/><rect x="1051" y="0" width="1" height="7" fill="#e0e0e0"/><rect x="1060" y="3" width="1" height="4" fill="#d8d8d8"/><rect x="1069" y="4" width="1" height="3" fill="#d0d0d0"/><rect x="1078" y="3" width="1" height="4" fill="#d8d8d8"/><rect x="1086" y="4" width="1" height="3" fill="#d0d0d0"/><rect x="1095" y="3" width="1" height="4" fill="#d8d8d8"/><rect x="1104" y="4" width="1" height="3" fill="#d0d0d0"/><rect x="1113" y="3" width="1" height="4" fill="#d8d8d8"/><rect x="1121" y="4" width="1" height="3" fill="#d0d0d0"/><rect x="1127" y="1" width="1.2" height="12" fill="#e0e0e0"/><rect x="0.8" y="5" width="1.2" height="7" fill="#dcdcdc"/></svg>
<svg class="a" style="left:96px;top:562px;" width="12" height="7" viewBox="0 0 12 7"><path d="M0 0 H12 L6 7 Z" fill="#f39c1e"/></svg>
<div class="t" style="left:103px;top:552px;font-size:11px;line-height:11px;color:#f39c1e;letter-spacing:0px;">1</div>
<div class="a" style="left:171px;top:572px;width:2px;height:2px;background:#f39c1e;"></div>
<div class="a" style="left:570px;top:552px;width:3px;height:34px;background:#e8501a;"></div>
<div class="t" style="left:576px;top:552px;font-size:11px;line-height:11px;color:#e8501a;letter-spacing:0.4px;">269</div>
<div class="t" style="left:101px;top:576px;font-size:11px;line-height:11px;color:#e0e0e0;letter-spacing:0.3px;">1</div>
<div class="t" style="left:265px;top:576px;font-size:11px;line-height:11px;color:#e0e0e0;letter-spacing:0.3px;">100</div>
<div class="t" style="left:440px;top:576px;font-size:11px;line-height:11px;color:#e0e0e0;letter-spacing:0.3px;">200</div>
<div class="t" style="left:615px;top:576px;font-size:11px;line-height:11px;color:#e0e0e0;letter-spacing:0.3px;">300</div>
<div class="t" style="left:791px;top:576px;font-size:11px;line-height:11px;color:#e0e0e0;letter-spacing:0.3px;">400</div>
<div class="t" style="left:966px;top:576px;font-size:11px;line-height:11px;color:#e0e0e0;letter-spacing:0.3px;">500</div>
<div class="t" style="left:1141px;top:576px;font-size:11px;line-height:11px;color:#e0e0e0;letter-spacing:0.3px;">600</div>
<div class="t" style="left:1207px;top:576px;font-size:11px;line-height:11px;color:#e0e0e0;letter-spacing:0.3px;">643</div>
<div class="a" style="left:1235px;top:555px;width:48px;height:30px;background:#393939;border-radius:4px"></div>
<div class="t" style="left:1247px;top:565px;font-size:12px;line-height:12px;color:#e6e6e6;letter-spacing:0.2px;">269</div>
<svg class="a" style="left:1289px;top:575px;" width="9" height="12" viewBox="0 0 9 12"><path d="M1 1 L4.5 5 L8 1 M1 5.5 L4.5 9.5 L8 5.5" stroke="#9a9a9a" stroke-width="1.2" fill="none"/></svg>
<div class="a" style="left:47px;top:591px;width:44px;height:19px;background:#2d2d2d;border:1px solid #222;border-radius:3px 0 0 3px"></div>
<div class="a" style="left:91px;top:591px;width:15px;height:19px;background:#484848;border:1px solid #222;border-radius:0 3px 3px 0"></div>
<svg class="a" style="left:95px;top:599px;" width="6" height="3" viewBox="0 0 6 3"><path d="M0 0 H6 L3.0 3 Z" fill="#d0d0d0"/></svg>
<div class="t" style="left:50px;top:596px;font-size:12px;line-height:12px;color:#d8d8d8;letter-spacing:0.3px;">24*</div>
<div class="t" style="left:114px;top:595px;font-size:12px;line-height:12px;color:#c8c8c8;letter-spacing:0px;">TF</div>
<svg class="a" style="left:131px;top:598px;" width="6" height="3" viewBox="0 0 6 3"><path d="M0 0 H6 L3.0 3 Z" fill="#c8c8c8"/></svg>
<div class="a" style="left:145px;top:592px;width:1px;height:18px;background:#242424;"></div>
<div class="t" style="left:153px;top:595px;font-size:12px;line-height:12px;color:#c8c8c8;letter-spacing:0.4px;">Global</div>
<svg class="a" style="left:202px;top:598px;" width="6" height="3" viewBox="0 0 6 3"><path d="M0 0 H6 L3.0 3 Z" fill="#c8c8c8"/></svg>
<div class="a" style="left:216px;top:592px;width:1px;height:18px;background:#242424;"></div>
<svg class="a" style="left:444px;top:593px;" width="20" height="16" viewBox="0 0 20 16"><path d="M3 6 A6 5 0 0 1 14 5 M15 10 A6 5 0 0 1 4 11" stroke="#b0b0b0" stroke-width="2" fill="none"/><path d="M12 2 L16 5 L12 8 Z M6 8 L2 11 L6 14 Z" fill="#b0b0b0"/><path d="M15 13 H20 L17.5 16 Z" fill="#b0b0b0"/></svg>
<div class="a" style="left:472px;top:590px;width:17px;height:22px;background:#3c3c3c;border:1px solid #242424;border-radius:3px"></div>
<svg class="a" style="left:472px;top:590px;" width="17" height="22" viewBox="0 0 17 22"><path d="M6 7 H11 M8.5 7 V16 M6 16 H11" stroke="#e8501a" stroke-width="1.5"/></svg>
<div class="a" style="left:491px;top:590px;width:30px;height:22px;background:#3c3c3c;border:1px solid #242424;border-radius:3px"></div>
<svg class="a" style="left:491px;top:590px;" width="30" height="22" viewBox="0 0 30 22"><rect x="9" y="6" width="2.5" height="10" fill="#b4b4b4"/><path d="M21 6 V16 L11.5 11 Z" fill="#b4b4b4"/></svg>
<div class="a" style="left:523px;top:590px;width:30px;height:22px;background:#3c3c3c;border:1px solid #242424;border-radius:3px"></div>
<svg class="a" style="left:523px;top:590px;" width="30" height="22" viewBox="0 0 30 22"><path d="M22 6 V16 L12 11 Z" fill="#b4b4b4"/><circle cx="10" cy="14" r="2.2" fill="none" stroke="#b4b4b4" stroke-width="1.2"/><path d="M10 6 V12" stroke="#b4b4b4" stroke-width="1.2"/></svg>
<div class="a" style="left:555px;top:590px;width:30px;height:22px;background:#3c3c3c;border:1px solid #242424;border-radius:3px"></div>
<svg class="a" style="left:555px;top:590px;" width="30" height="22" viewBox="0 0 30 22"><path d="M18 6 V16 L8 11 Z" fill="#b4b4b4"/><rect x="19" y="6" width="2.5" height="10" fill="#b4b4b4"/></svg>
<div class="a" style="left:587px;top:590px;width:31px;height:22px;background:#3c3c3c;border:1px solid #242424;border-radius:3px"></div>
<svg class="a" style="left:587px;top:590px;" width="31" height="22" viewBox="0 0 31 22"><path d="M20 6 V16 L11 11 Z" fill="#b4b4b4"/></svg>
<div class="a" style="left:620px;top:590px;width:47px;height:22px;background:#2d2d2d;"></div>
<div class="t" style="left:639px;top:596px;font-size:12px;line-height:12px;color:#f39c1e;letter-spacing:0px;">1</div>
<div class="a" style="left:669px;top:590px;width:30px;height:22px;background:#3c3c3c;border:1px solid #242424;border-radius:3px"></div>
<svg class="a" style="left:669px;top:590px;" width="30" height="22" viewBox="0 0 30 22"><path d="M11 6 V16 L20 11 Z" fill="#b4b4b4"/></svg>
<div class="a" style="left:701px;top:590px;width:30px;height:22px;background:#3c3c3c;border:1px solid #242424;border-radius:3px"></div>
<svg class="a" style="left:701px;top:590px;" width="30" height="22" viewBox="0 0 30 22"><rect x="9" y="6" width="2.5" height="10" fill="#b4b4b4"/><path d="M12.5 6 V16 L22 11 Z" fill="#b4b4b4"/></svg>
<div class="a" style="left:733px;top:590px;width:30px;height:22px;background:#3c3c3c;border:1px solid #242424;border-radius:3px"></div>
<svg class="a" style="left:733px;top:590px;" width="30" height="22" viewBox="0 0 30 22"><path d="M8 6 V16 L18 11 Z" fill="#b4b4b4"/><circle cx="21" cy="14" r="2.2" fill="none" stroke="#b4b4b4" stroke-width="1.2"/><path d="M21 6 V12" stroke="#b4b4b4" stroke-width="1.2"/></svg>
<div class="a" style="left:765px;top:590px;width:30px;height:22px;background:#3c3c3c;border:1px solid #242424;border-radius:3px"></div>
<svg class="a" style="left:765px;top:590px;" width="30" height="22" viewBox="0 0 30 22"><path d="M9 6 V16 L18.5 11 Z" fill="#b4b4b4"/><rect x="19" y="6" width="2.5" height="10" fill="#b4b4b4"/></svg>
<div class="a" style="left:797px;top:590px;width:16px;height:22px;background:#3c3c3c;border:1px solid #242424;border-radius:3px"></div>
<svg class="a" style="left:797px;top:590px;" width="16" height="22" viewBox="0 0 16 22"><ellipse cx="8" cy="11.5" rx="3.6" ry="4.2" fill="none" stroke="#e8501a" stroke-width="1.5"/></svg>
<div class="a" style="left:826px;top:590px;width:21px;height:22px;background:#3c3c3c;border:1px solid #242424;border-radius:3px"></div>
<svg class="a" style="left:826px;top:590px;" width="21" height="22" viewBox="0 0 21 22"><path d="M10 7 V15 L4 11 Z M16 7 V15 L10 11 Z" fill="#b4b4b4"/></svg>
<div class="a" style="left:849px;top:590px;width:22px;height:22px;background:#2d2d2d;border:1px solid #242424;border-radius:3px"></div>
<div class="t" style="left:851px;top:596px;font-size:12px;line-height:12px;color:#d8d8d8;letter-spacing:0.2px;">10</div>
<div class="a" style="left:873px;top:590px;width:21px;height:22px;background:#3c3c3c;border:1px solid #242424;border-radius:3px"></div>
<svg class="a" style="left:873px;top:590px;" width="21" height="22" viewBox="0 0 21 22"><path d="M5 7 V15 L11 11 Z M11 7 V15 L17 11 Z" fill="#b4b4b4"/></svg>
<svg class="a" style="left:1146px;top:595px;" width="14" height="12" viewBox="0 0 14 12"><rect width="14" height="12" fill="#b0b0b0"/><path d="M3 2 V10 L11 6 Z" fill="#323232"/></svg>
<svg class="a" style="left:1168px;top:595px;" width="14" height="12" viewBox="0 0 14 12"><rect width="14" height="12" fill="#b0b0b0"/><circle cx="7" cy="6" r="3.6" fill="#323232"/></svg>
<svg class="a" style="left:1191px;top:593px;" width="12" height="14" viewBox="0 0 12 14"><path d="M3 7 V4.5 A3 3 0 0 1 9 4.5 V7" stroke="#b0b0b0" stroke-width="1.6" fill="none"/><rect x="0" y="7" width="12" height="7" fill="#b0b0b0"/><rect x="5.5" y="9" width="1.2" height="3" fill="#323232"/></svg>
<svg class="a" style="left:1213px;top:593px;" width="17" height="14" viewBox="0 0 17 14"><path d="M8 0 L12 4 L8 8 Z" fill="#ee0000"/><rect x="7.5" y="0" width="1.3" height="10" fill="#ee0000"/><path d="M0.8 9 V13.2 H16.2 V9" stroke="#ee0000" stroke-width="1.6" fill="none"/><path d="M4.5 11 V13 M8.5 11 V13 M12.5 11 V13" stroke="#ee0000" stroke-width="1"/></svg>
<div class="a" style="left:1235px;top:590px;width:48px;height:21px;background:#393939;border-radius:4px"></div>
<div class="t" style="left:1247px;top:595px;font-size:12px;line-height:12px;color:#e6e6e6;letter-spacing:0.2px;">269</div>
<div class="a" style="left:43px;top:616px;width:1258px;height:1px;background:#121212;"></div>
<div class="a" style="left:43px;top:617px;width:1258px;height:26px;background:#262626;"></div>
<div class="a" style="left:46px;top:621px;width:9px;height:9px;background:#b4b4b4;"></div>
<div class="a" style="left:46px;top:630px;width:9px;height:7px;background:#969696;"></div>
<div class="a" style="left:55px;top:621px;width:7px;height:16px;background:#5c5c5c;"></div>
<div class="a" style="left:67px;top:619px;width:111px;height:24px;background:#323232;border-radius:3px 3px 0 0"></div>
<div class="t" style="left:78px;top:626px;font-size:12px;line-height:12px;color:#f2b77a;letter-spacing:0.1px;">Node Graph</div>
<svg class="a" style="left:154px;top:624px;" width="14" height="14" viewBox="0 0 14 14"><circle cx="7" cy="7" r="6.5" fill="#2c2c2c"/><path d="M4.3 4.3 L9.7 9.7 M9.7 4.3 L4.3 9.7" stroke="#8a8a8a" stroke-width="1.8"/></svg>
<div class="a" style="left:177px;top:622px;width:116px;height:20px;background:#262626;border:1px solid #1a1a1a;border-radius:3px 3px 0 0"></div>
<div class="t" style="left:190px;top:627px;font-size:12px;line-height:12px;color:#c8c8c8;letter-spacing:0.12px;">Curve Editor</div>
<svg class="a" style="left:270px;top:625px;" width="14" height="14" viewBox="0 0 14 14"><circle cx="7" cy="7" r="6.5" fill="#3a3a3a"/><path d="M4.3 4.3 L9.7 9.7 M9.7 4.3 L4.3 9.7" stroke="#7a7a7a" stroke-width="1.8"/></svg>
<div class="a" style="left:293px;top:622px;width:107px;height:20px;background:#262626;border:1px solid #1a1a1a;border-radius:3px 3px 0 0"></div>
<div class="t" style="left:306px;top:627px;font-size:12px;line-height:12px;color:#c8c8c8;letter-spacing:0.2px;">Dope Sheet</div>
<svg class="a" style="left:381px;top:625px;" width="14" height="14" viewBox="0 0 14 14"><circle cx="7" cy="7" r="6.5" fill="#3a3a3a"/><path d="M4.3 4.3 L9.7 9.7 M9.7 4.3 L4.3 9.7" stroke="#7a7a7a" stroke-width="1.8"/></svg>
<div class="a" style="left:43px;top:643px;width:1258px;height:376px;background:#323232;"></div>
<div class="a" style="left:0;top:643px;width:1301px;height:376px;overflow:hidden"><div class="a" style="left:0;top:-643px;width:1920px;height:1080px">
<div class="a" style="left:44px;top:643px;width:355px;height:336px;background:#71c472;"></div>
<svg class="a" style="left:384px;top:965px;" width="15" height="14" viewBox="0 0 15 14"><path d="M15 0 L15 14 L0 14 Z" fill="#8ad48a"/></svg>
<div class="a" style="left:47px;top:634px;width:80px;height:30px;background:linear-gradient(#6cc06c,#4a9a4a);border:1px solid #2e5a2e;"></div>
<div class="t" style="left:-113px;width:400px;text-align:center;top:638px;font-size:11px;line-height:11px;color:#111;letter-spacing:0.5px;">Roto3</div>
<div class="t" style="left:-113px;width:400px;text-align:center;top:650px;font-size:11px;line-height:11px;color:#111;letter-spacing:0.5px;">(alpha)</div>
<div class="a" style="left:52px;top:659px;width:2px;height:3px;background:#ff0000;"></div>
<div class="a" style="left:59px;top:659px;width:2px;height:3px;background:#00ee00;"></div>
<div class="a" style="left:66px;top:659px;width:2px;height:3px;background:#0000ff;"></div>
<div class="a" style="left:71px;top:659px;width:8px;height:3px;background:#ffffff;"></div>
<div class="a" style="left:127px;top:647px;width:163px;height:2px;background:#f7b55a;"></div>
<svg class="a" style="left:127px;top:643px;" width="8" height="10" viewBox="0 0 8 10"><path d="M0 5 L8 0 L8 10 Z" fill="#f7b55a"/></svg>
<svg class="a" style="left:282px;top:643px;" width="12" height="10" viewBox="0 0 12 10"><path d="M0 0 L12 5 L0 10 Z" fill="#f7b55a"/></svg>
<svg class="a" style="left:206px;top:644px;" width="8" height="8" viewBox="0 0 8 8"><path d="M4 0 L8 4 L4 8 L0 4 Z" fill="#ffff00"/></svg>
<div class="t" style="left:275px;top:646px;font-size:11px;line-height:11px;color:#e8e8e8;letter-spacing:0px;">A</div>
<svg class="a" style="left:43px;top:643px;" width="5" height="10" viewBox="0 0 5 10"><path d="M0 0 L5 5 L0 10 Z" fill="#f7b55a"/></svg>
<div class="a" style="left:294px;top:634px;width:80px;height:30px;background:linear-gradient(#9c4468,#5a2040);border:1px solid #3a1a2a;"></div>
<div class="t" style="left:134px;width:400px;text-align:center;top:638px;font-size:11px;line-height:11px;color:#111;letter-spacing:0.5px;">Copy3</div>
<div class="t" style="left:134px;width:400px;text-align:center;top:650px;font-size:11px;line-height:11px;color:#111;letter-spacing:0.5px;">(alpha -&gt; alpha)</div>
<div class="a" style="left:299px;top:659px;width:2px;height:3px;background:#ff0000;"></div>
<div class="a" style="left:306px;top:659px;width:2px;height:3px;background:#00ee00;"></div>
<div class="a" style="left:313px;top:659px;width:2px;height:3px;background:#0000ff;"></div>
<div class="a" style="left:318px;top:659px;width:8px;height:3px;background:#ffffff;"></div>
<svg class="a" style="left:376px;top:644px;" width="5" height="8" viewBox="0 0 5 8"><path d="M5 0 V8 L0 4.0 Z" fill="#f7b55a"/></svg>
<svg class="a" style="left:330px;top:664px;" width="8" height="7" viewBox="0 0 8 7"><path d="M0 0 H8 L4.0 7 Z" fill="#f7b55a"/></svg>
<div class="a" style="left:294px;top:670px;width:80px;height:20px;background:linear-gradient(#aac6f6,#6a7aa0);border:1px solid #2e3a4a;"></div>
<div class="t" style="left:134px;width:400px;text-align:center;top:676px;font-size:11px;line-height:11px;color:#111;letter-spacing:0.5px;">HueCorrect3</div>
<div class="a" style="left:297px;top:685px;width:8px;height:3px;background:#ff0000;"></div>
<div class="a" style="left:305px;top:685px;width:7px;height:3px;background:#00ee00;"></div>
<div class="a" style="left:312px;top:685px;width:8px;height:3px;background:#0000ff;"></div>
<div class="a" style="left:321px;top:685px;width:2px;height:3px;background:#ffffff;"></div>
<svg class="a" style="left:376px;top:676px;" width="5" height="8" viewBox="0 0 5 8"><path d="M5 0 V8 L0 4.0 Z" fill="#f7b55a"/></svg>
<svg class="a" style="left:330px;top:690px;" width="8" height="7" viewBox="0 0 8 7"><path d="M0 0 H8 L4.0 7 Z" fill="#f7b55a"/></svg>
<div class="a" style="left:294px;top:696px;width:80px;height:31px;background:linear-gradient(#ea9a62,#9a5a30);border:1px solid #4a2a18;"></div>
<div class="t" style="left:134px;width:400px;text-align:center;top:701px;font-size:11px;line-height:11px;color:#111;letter-spacing:0.5px;">FilterErode5</div>
<div class="t" style="left:134px;width:400px;text-align:center;top:713px;font-size:11px;line-height:11px;color:#111;letter-spacing:0.5px;">(alpha)</div>
<div class="a" style="left:299px;top:722px;width:2px;height:3px;background:#ff0000;"></div>
<div class="a" style="left:306px;top:722px;width:2px;height:3px;background:#00ee00;"></div>
<div class="a" style="left:313px;top:722px;width:2px;height:3px;background:#0000ff;"></div>
<div class="a" style="left:318px;top:722px;width:8px;height:3px;background:#ffffff;"></div>
<svg class="a" style="left:376px;top:708px;" width="5" height="8" viewBox="0 0 5 8"><path d="M5 0 V8 L0 4.0 Z" fill="#f7b55a"/></svg>
<svg class="a" style="left:330px;top:727px;" width="8" height="7" viewBox="0 0 8 7"><path d="M0 0 H8 L4.0 7 Z" fill="#f7b55a"/></svg>
<div class="a" style="left:294px;top:734px;width:80px;height:32px;background:linear-gradient(#ea9a62,#9a5a30);border:1px solid #4a2a18;"></div>
<div class="t" style="left:134px;width:400px;text-align:center;top:740px;font-size:11px;line-height:11px;color:#111;letter-spacing:0.5px;">FilterErode6</div>
<div class="t" style="left:134px;width:400px;text-align:center;top:752px;font-size:11px;line-height:11px;color:#111;letter-spacing:0.5px;">(alpha)</div>
<div class="a" style="left:299px;top:761px;width:2px;height:3px;background:#ff0000;"></div>
<div class="a" style="left:306px;top:761px;width:2px;height:3px;background:#00ee00;"></div>
<div class="a" style="left:313px;top:761px;width:2px;height:3px;background:#0000ff;"></div>
<div class="a" style="left:318px;top:761px;width:8px;height:3px;background:#ffffff;"></div>
<svg class="a" style="left:376px;top:746px;" width="5" height="8" viewBox="0 0 5 8"><path d="M5 0 V8 L0 4.0 Z" fill="#f7b55a"/></svg>
<div class="a" style="left:333px;top:766px;width:2px;height:10px;background:#f7b55a;"></div>
<svg class="a" style="left:330px;top:770px;" width="8" height="11" viewBox="0 0 8 11"><path d="M0 0 H8 L4.0 11 Z" fill="#f7b55a"/></svg>
<div class="a" style="left:294px;top:782px;width:80px;height:20px;background:linear-gradient(#ececec,#8c8c8c);border:1px solid #3a3a3a;"></div>
<div class="t" style="left:134px;width:400px;text-align:center;top:788px;font-size:11px;line-height:11px;color:#111;letter-spacing:0.5px;">Premult3</div>
<div class="a" style="left:297px;top:797px;width:8px;height:3px;background:#ff0000;"></div>
<div class="a" style="left:305px;top:797px;width:7px;height:3px;background:#00ee00;"></div>
<div class="a" style="left:312px;top:797px;width:8px;height:3px;background:#0000ff;"></div>
<div class="a" style="left:321px;top:797px;width:2px;height:3px;background:#ffffff;"></div>
<div class="a" style="left:333px;top:802px;width:2px;height:122px;background:#f7b55a;"></div>
<svg class="a" style="left:330px;top:861px;" width="8" height="8" viewBox="0 0 8 8"><path d="M4 0 L8 4 L4 8 L0 4 Z" fill="#ffff00"/></svg>
<svg class="a" style="left:330px;top:917px;" width="8" height="12" viewBox="0 0 8 12"><path d="M0 0 H8 L4.0 12 Z" fill="#f7b55a"/></svg>
<div class="a" style="left:294px;top:929px;width:80px;height:20px;background:linear-gradient(#b48ac4,#7a5a8a);border:1px solid #3a2a44;"></div>
<div class="t" style="left:134px;width:400px;text-align:center;top:935px;font-size:11px;line-height:11px;color:#111;letter-spacing:0.5px;">Transform3</div>
<div class="a" style="left:297px;top:944px;width:8px;height:3px;background:#ff0000;"></div>
<div class="a" style="left:305px;top:944px;width:7px;height:3px;background:#00ee00;"></div>
<div class="a" style="left:312px;top:944px;width:8px;height:3px;background:#0000ff;"></div>
<div class="a" style="left:320px;top:944px;width:8px;height:3px;background:#ffffff;"></div>
<svg class="a" style="left:369px;top:924px;" width="10" height="10" viewBox="0 0 10 10"><circle cx="5" cy="5" r="4.2" fill="#c84a4a" stroke="#ffb0b0" stroke-width="1"/><path d="M3 6.5 L5 3 L7 6.5" stroke="#fff" stroke-width="1" fill="none"/></svg>
<div class="a" style="left:374px;top:939px;width:76px;height:2px;background:#f7b55a;"></div>
<svg class="a" style="left:413px;top:936px;" width="8" height="8" viewBox="0 0 8 8"><path d="M4 0 L8 4 L4 8 L0 4 Z" fill="#ffff00"/></svg>
<svg class="a" style="left:448px;top:935px;" width="12" height="10" viewBox="0 0 12 10"><path d="M0 0 L12 5 L0 10 Z" fill="#f7b55a"/></svg>
<div class="t" style="left:441px;top:936px;font-size:11px;line-height:11px;color:#d0d0d0;letter-spacing:0px;">A</div>
<div class="a" style="left:460px;top:660px;width:79px;height:79px;background:linear-gradient(#dedede,#7e7e7e);border:1px solid #444"></div>
<svg class="a" style="left:471px;top:662px;" width="57" height="43" viewBox="0 0 57 43"><defs><linearGradient id="g14" x1="0" y1="0" x2="0" y2="1"><stop offset="0" stop-color="#7ab048"/><stop offset="1" stop-color="#6ea040"/></linearGradient></defs><rect width="57" height="43" fill="#e6e8e8"/><path d="M0 15 Q3 12 6 14 Q9 11 12 15 L18 17 Q20 7 24 7 Q28 8 29 17 L33 17 Q35 5 42 3 Q50 2 57 6 L57 20 L0 20 Z" fill="#66903e"/><path d="M36 8 Q44 4 57 8 L57 20 L36 20 Z" fill="#4e7a34" opacity="0.6"/><rect x="23" y="14" width="1.5" height="7" fill="#3a3a30"/><rect x="0" y="19" width="57" height="24" fill="url(#g14)"/><path d="M0 33 Q12 28 28 24 L30 25 Q14 30 0 36 Z" fill="#b0a070" opacity="0.85"/></svg>
<div class="t" style="left:299px;width:400px;text-align:center;top:711px;font-size:11px;line-height:11px;color:#111;letter-spacing:0.4px;">Read14</div>
<div class="t" style="left:299px;width:400px;text-align:center;top:723px;font-size:11px;line-height:11px;color:#111;letter-spacing:0.4px;">bg2.JPG</div>
<div class="a" style="left:463px;top:735px;width:8px;height:3px;background:#ff0000;"></div>
<div class="a" style="left:471px;top:735px;width:7px;height:3px;background:#00ee00;"></div>
<div class="a" style="left:478px;top:735px;width:8px;height:3px;background:#0000ff;"></div>
<svg class="a" style="left:496px;top:741px;" width="8" height="8" viewBox="0 0 8 8"><path d="M0 0 H8 L4.0 8 Z" fill="#f7b55a"/></svg>
<div class="a" style="left:460px;top:752px;width:80px;height:32px;background:linear-gradient(#bc94cc,#8a609a);border:1px solid #3a2a44;"></div>
<div class="t" style="left:300px;width:400px;text-align:center;top:758px;font-size:11px;line-height:11px;color:#111;letter-spacing:0.5px;">Reformat1</div>
<div class="t" style="left:300px;width:400px;text-align:center;top:770px;font-size:11px;line-height:11px;color:#111;letter-spacing:0.5px;">(footage)</div>
<div class="a" style="left:463px;top:779px;width:8px;height:3px;background:#ff0000;"></div>
<div class="a" style="left:471px;top:779px;width:7px;height:3px;background:#00ee00;"></div>
<div class="a" style="left:478px;top:779px;width:8px;height:3px;background:#0000ff;"></div>
<div class="a" style="left:487px;top:779px;width:2px;height:3px;background:#ffffff;"></div>
<svg class="a" style="left:496px;top:784px;" width="8" height="6" viewBox="0 0 8 6"><path d="M0 0 H8 L4.0 6 Z" fill="#f7b55a"/></svg>
<div class="a" style="left:460px;top:791px;width:80px;height:19px;background:#f5b26e;border:2px solid #a878b8"></div>
<div class="t" style="left:300px;width:400px;text-align:center;top:796px;font-size:11px;line-height:11px;color:#111;letter-spacing:0.4px;">Transform8</div>
<div class="a" style="left:463px;top:805px;width:8px;height:3px;background:#ff0000;"></div>
<div class="a" style="left:471px;top:805px;width:7px;height:3px;background:#00ee00;"></div>
<div class="a" style="left:478px;top:805px;width:8px;height:3px;background:#0000ff;"></div>
<div class="a" style="left:486px;top:805px;width:7px;height:3px;background:#ffffff;"></div>
<div class="a" style="left:572px;top:735px;width:79px;height:79px;background:linear-gradient(#d0d0d0,#8a8a8a);border:1px solid #bbb"></div>
<svg class="a" style="left:574px;top:737px;" width="76" height="42" viewBox="0 0 76 42"><defs><linearGradient id="g7" x1="0" y1="0" x2="0" y2="1"><stop offset="0" stop-color="#486c42"/><stop offset="0.55" stop-color="#4e7448"/><stop offset="1" stop-color="#6a8c60"/></linearGradient></defs><rect width="76" height="42" fill="url(#g7)"/><rect x="0" y="0" width="20" height="42" fill="#3e5e3a" opacity="0.35"/><path d="M0 38 Q20 36 40 38 L40 42 L0 42 Z" fill="#8a8278" opacity="0.8"/></svg>
<div class="t" style="left:411px;width:400px;text-align:center;top:785px;font-size:11px;line-height:11px;color:#111;letter-spacing:0.4px;">Read7</div>
<div class="t" style="left:414px;width:400px;text-align:center;top:797px;font-size:11px;line-height:11px;color:#111;letter-spacing:0.35px;">A003_01070216_C011.mov</div>
<div class="a" style="left:576px;top:809px;width:8px;height:3px;background:#ff0000;"></div>
<div class="a" style="left:584px;top:809px;width:7px;height:3px;background:#00ee00;"></div>
<div class="a" style="left:591px;top:809px;width:8px;height:3px;background:#0000ff;"></div>
<div class="a" style="left:600px;top:809px;width:8px;height:3px;background:#ffffff;"></div>
<div class="a" style="left:499px;top:810px;width:2px;height:112px;background:#f7b55a;"></div>
<svg class="a" style="left:496px;top:865px;" width="8" height="8" viewBox="0 0 8 8"><path d="M4 0 L8 4 L4 8 L0 4 Z" fill="#ffff00"/></svg>
<div class="t" style="left:496px;top:911px;font-size:11px;line-height:11px;color:#e8e8e8;letter-spacing:0px;">B</div>
<svg class="a" style="left:496px;top:918px;" width="8" height="11" viewBox="0 0 8 11"><path d="M0 0 H8 L4.0 11 Z" fill="#f7b55a"/></svg>
<div class="a" style="left:460px;top:929px;width:80px;height:20px;background:linear-gradient(#5a68d8,#3444a8);border:1px solid #1e2460;"></div>
<div class="t" style="left:300px;width:400px;text-align:center;top:935px;font-size:11px;line-height:11px;color:#111;letter-spacing:0.5px;">Merge1 (over)</div>
<div class="a" style="left:463px;top:944px;width:8px;height:3px;background:#ff0000;"></div>
<div class="a" style="left:471px;top:944px;width:7px;height:3px;background:#00ee00;"></div>
<div class="a" style="left:478px;top:944px;width:8px;height:3px;background:#0000ff;"></div>
<div class="a" style="left:486px;top:944px;width:8px;height:3px;background:#ffffff;"></div>
<svg class="a" style="left:540px;top:936px;" width="5" height="8" viewBox="0 0 5 8"><path d="M5 0 V8 L0 4.0 Z" fill="#f7b55a"/></svg>
<div class="a" style="left:499px;top:949px;width:2px;height:66px;background:#f7b55a;"></div>
<svg class="a" style="left:496px;top:984px;" width="8" height="8" viewBox="0 0 8 8"><path d="M4 0 L8 4 L4 8 L0 4 Z" fill="#ffff00"/></svg>
<div class="t" style="left:496px;top:1008px;font-size:11px;line-height:11px;color:#e8e8e8;letter-spacing:0px;">B</div>
<svg class="a" style="left:610px;top:814px;" width="3" height="200" viewBox="0 0 3 200"><path d="M1.5 0 V200" stroke="#111" stroke-width="1.6" stroke-dasharray="2 2"/></svg>
<svg class="a" style="left:607px;top:916px;" width="8" height="8" viewBox="0 0 8 8"><path d="M4 0 L8 4 L4 8 L0 4 Z" fill="#ffff00"/></svg>
<div class="t" style="left:605px;top:1009px;font-size:11px;line-height:11px;color:#f7b55a;letter-spacing:0px;">2</div>
<svg class="a" style="left:1063px;top:912px;" width="24" height="35" viewBox="0 0 24 35"><path d="M2 2 L19 31" stroke="#000" stroke-width="2"/><path d="M13 28 L21 34 L21 24 Z" fill="#000"/></svg>
<div class="a" style="left:1049px;top:945px;width:80px;height:20px;background:linear-gradient(#a8c2f2,#5e76ae);border:1px solid #222"></div>
<div class="t" style="left:889px;width:400px;text-align:center;top:951px;font-size:11px;line-height:11px;color:#111;letter-spacing:0.5px;">Grade1</div>
<svg class="a" style="left:1082px;top:965px;" width="12" height="8" viewBox="0 0 12 8"><path d="M0 0 H12 L6 8 Z" fill="#000"/></svg>
<svg class="a" style="left:1130px;top:951px;" width="5" height="9" viewBox="0 0 5 9"><path d="M5 0 V9 L0 4.5 Z" fill="#000"/></svg>
<div class="a" style="left:1111px;top:963px;width:190px;height:1px;background:#d8d8d8;"></div>
<div class="a" style="left:1111px;top:963px;width:1px;height:56px;background:#d8d8d8;"></div>
<div class="a" style="left:1112px;top:964px;width:4px;height:4px;background:none;border:1px solid #d8d8d8"></div>
<svg class="a" style="left:1142px;top:963px;" width="140" height="56" viewBox="0 0 140 56"><rect x="0" y="2" width="16" height="44" fill="#755a75"/>
<rect x="17" y="2" width="16" height="42" fill="#9a3c9a"/>
<rect x="35" y="2" width="18" height="39" fill="#7a78c8"/>
<rect x="55" y="2" width="16" height="37" fill="#b0b0b0"/>
<rect x="73" y="2" width="15" height="32" fill="#2a9090"/>
<rect x="90" y="3" width="13" height="28" fill="#70c070"/>
<rect x="91" y="20" width="44" height="13" fill="#554848" stroke="#f0b0b0" stroke-width="1"/>
<path d="M33 44 H103 M53 41 H103 M72 38 H103 M88 34 H103" stroke="#c89a50" stroke-width="1.5"/>
<path d="M103 28 V54" stroke="#c89a50" stroke-width="1.5"/><path d="M105 28 V54" stroke="#222" stroke-width="1.5"/>
<rect x="4" y="16" width="8" height="3" fill="#d0e0a0"/><rect x="20" y="16" width="8" height="3" fill="#d0e0a0"/><rect x="38" y="14" width="8" height="3" fill="#d0c0a0"/><rect x="58" y="14" width="8" height="3" fill="#d0c0a0"/>
<rect x="10" y="2" width="3" height="3" fill="#ddd"/><rect x="27" y="2" width="3" height="3" fill="#ddd"/><rect x="46" y="3" width="3" height="3" fill="#ddd"/><rect x="65" y="3" width="3" height="3" fill="#ddd"/><rect x="82" y="3" width="3" height="3" fill="#ddd"/><rect x="97" y="4" width="3" height="3" fill="#ddd"/></svg>
</div></div>
<div class="a" style="left:1301px;top:617px;width:2px;height:402px;background:#0e0e0e;"></div>
<div class="a" style="left:1303px;top:617px;width:1px;height:402px;background:#3a3a3a;"></div>
<div class="a" style="left:1301px;top:45px;width:2px;height:974px;background:#0e0e0e;"></div>
<div class="a" style="left:1303px;top:45px;width:1px;height:974px;background:#3a3a3a;"></div>
<div class="a" style="left:1304px;top:45px;width:616px;height:25px;background:#262626;"></div>
<div class="a" style="left:1307px;top:48px;width:9px;height:9px;background:#b4b4b4;"></div>
<div class="a" style="left:1307px;top:57px;width:9px;height:7px;background:#969696;"></div>
<div class="a" style="left:1316px;top:48px;width:7px;height:16px;background:#5c5c5c;"></div>
<div class="a" style="left:1328px;top:47px;width:101px;height:23px;background:#323232;border-radius:3px 3px 0 0"></div>
<div class="t" style="left:1339px;top:53px;font-size:12px;line-height:12px;color:#d2d2d2;letter-spacing:0.35px;">Properties</div>
<svg class="a" style="left:1405px;top:51px;" width="14" height="14" viewBox="0 0 14 14"><circle cx="7" cy="7" r="6.5" fill="#2c2c2c"/><path d="M4.3 4.3 L9.7 9.7 M9.7 4.3 L4.3 9.7" stroke="#8a8a8a" stroke-width="1.8"/></svg>
<div class="a" style="left:1428px;top:49px;width:163px;height:20px;background:#262626;border:1px solid #1a1a1a;border-radius:3px 3px 0 0"></div>
<div class="t" style="left:1441px;top:54px;font-size:12px;line-height:12px;color:#c8c8c8;letter-spacing:0.3px;">Background Renders</div>
<svg class="a" style="left:1567px;top:52px;" width="14" height="14" viewBox="0 0 14 14"><circle cx="7" cy="7" r="6.5" fill="#3a3a3a"/><path d="M4.3 4.3 L9.7 9.7 M9.7 4.3 L4.3 9.7" stroke="#7a7a7a" stroke-width="1.8"/></svg>
<div class="a" style="left:1304px;top:70px;width:616px;height:949px;background:#323232;"></div>
<div class="a" style="left:1310px;top:76px;width:21px;height:20px;background:#353535;border:1px solid #222;border-radius:3px"></div>
<div class="t" style="left:1313px;top:81px;font-size:12px;line-height:12px;color:#d0d0d0;letter-spacing:0px;">10</div>
<svg class="a" style="left:1336px;top:78px;" width="15" height="15" viewBox="0 0 15 15"><path d="M7 7 V4 A3 3 0 0 1 13 4 V5" stroke="#111" stroke-width="1.8" fill="none"/><rect x="1" y="7" width="9" height="8" fill="#111"/></svg>
<svg class="a" style="left:1354px;top:78px;" width="17" height="15" viewBox="0 0 17 15"><path d="M0 3 H8 M0 7 H7 M0 11 H8" stroke="#c8c8c8" stroke-width="1.6"/><path d="M8 2 L16 13 M16 2 L8 13" stroke="#e0e0e0" stroke-width="2.4"/><path d="M0 13 H9" stroke="#888" stroke-width="1.2"/></svg>
<svg class="a" style="left:1377px;top:77px;" width="15" height="18" viewBox="0 0 15 18"><path d="M3 13 L11 2 L14 5 L6 15 L2 16 Z" fill="#d8d8d8"/><path d="M1 17.5 H13" stroke="#d8d8d8" stroke-width="1.3"/></svg>
<div class="a" style="left:1395px;top:77px;width:1px;height:17px;background:#222;"></div>
<div class="a" style="left:1902px;top:104px;width:16px;height:915px;background:#2a2a2a;"></div>
<div class="a" style="left:1903px;top:104px;width:14px;height:14px;background:#3e3e3e;border-radius:3px"></div>
<svg class="a" style="left:1906px;top:108px;" width="8" height="5" viewBox="0 0 8 5"><path d="M0 5 H8 L4 0 Z" fill="#e0e0e0"/></svg>
<div class="a" style="left:1903px;top:120px;width:14px;height:820px;background:#4a4a4a;border-radius:3px"></div>
<div class="a" style="left:1903px;top:986px;width:14px;height:15px;background:#3e3e3e;border-radius:3px"></div>
<svg class="a" style="left:1906px;top:991px;" width="8" height="5" viewBox="0 0 8 5"><path d="M0 5 H8 L4 0 Z" fill="#e0e0e0"/></svg>
<div class="a" style="left:1903px;top:1002px;width:14px;height:15px;background:#3e3e3e;border-radius:3px"></div>
<svg class="a" style="left:1906px;top:1007px;" width="8" height="5" viewBox="0 0 8 5"><path d="M0 0 H8 L4 5 Z" fill="#e0e0e0"/></svg>
<div class="a" style="left:1309px;top:104px;width:591px;height:356px;background:#323232;border:solid #b07ab8;border-width:2px 1px 1px 1px"></div>
<div class="a" style="left:1310px;top:106px;width:589px;height:23px;background:linear-gradient(#3a3a3a,#2c2c2c);border-bottom:1px solid #1e1e1e"></div>
<svg class="a" style="left:1316px;top:113px;" width="10" height="8" viewBox="0 0 10 8"><path d="M0 0 H10 L5 8 Z" fill="#000"/></svg>
<div class="a" style="left:1334px;top:108px;width:68px;height:20px;background:#454545;border:1px solid #222;border-radius:3px"></div>
<div class="a" style="left:1356px;top:108px;width:1px;height:20px;background:#222;"></div>
<div class="a" style="left:1379px;top:108px;width:1px;height:20px;background:#222;"></div>
<svg class="a" style="left:1339px;top:112px;" width="12" height="12" viewBox="0 0 12 12"><circle cx="6" cy="6" r="4.6" fill="none" stroke="#000" stroke-width="1.8"/><circle cx="6" cy="6" r="2.8" fill="none" stroke="#e8e8e8" stroke-width="1"/><circle cx="6" cy="6" r="1.3" fill="#000"/></svg>
<svg class="a" style="left:1360px;top:110px;" width="16" height="15" viewBox="0 0 16 15"><path d="M4 0 L7 5 M12 0 L9 5" stroke="#000" stroke-width="1.3"/><rect x="1" y="5" width="14" height="7" rx="1" fill="#000"/><path d="M6.5 12 L8 14 L9.5 12 Z" fill="#000"/></svg>
<svg class="a" style="left:1383px;top:109px;" width="14" height="18" viewBox="0 0 14 18"><path d="M3.5 1 Q0 4 1 8 Q2 10.5 4.5 11 V17 H9.5 V11 Q12 10.5 13 8 Q14 4 10.5 1 L10.5 5 Q9.5 6.5 7 6.5 Q4.5 6.5 3.5 5 Z" fill="#000"/></svg>
<div class="a" style="left:1413px;top:108px;width:293px;height:20px;background:#3a3a3a;border:1px solid #222;border-radius:3px"></div>
<div class="t" style="left:1418px;top:113px;font-size:12px;line-height:12px;color:#d8d8d8;letter-spacing:0.5px;">Transform8</div>
<div class="a" style="left:1716px;top:108px;width:114px;height:20px;background:#454545;border:1px solid #222;border-radius:3px"></div>
<div class="a" style="left:1738px;top:108px;width:1px;height:20px;background:#222;"></div>
<div class="a" style="left:1761px;top:108px;width:1px;height:20px;background:#222;"></div>
<div class="a" style="left:1784px;top:108px;width:1px;height:20px;background:#222;"></div>
<div class="a" style="left:1807px;top:108px;width:1px;height:20px;background:#222;"></div>
<svg class="a" style="left:1721px;top:112px;" width="11" height="11" viewBox="0 0 11 11"><rect x="0.8" y="0.8" width="9.4" height="9.4" fill="#b07ab8" stroke="#000" stroke-width="1.4"/><path d="M1 10 L10 1" stroke="#000" stroke-width="1.3"/></svg>
<svg class="a" style="left:1743px;top:112px;" width="11" height="11" viewBox="0 0 11 11"><rect x="0.8" y="0.8" width="9.4" height="9.4" fill="#d8d8d8" stroke="#000" stroke-width="1.4"/><path d="M1 10 L10 1" stroke="#000" stroke-width="1.3"/></svg>
<svg class="a" style="left:1765px;top:112px;" width="15" height="10" viewBox="0 0 15 10"><path d="M3.5 8 Q7 2 14 8" stroke="#000" stroke-width="2.8" fill="none"/><path d="M0 2.5 L0 9.5 L7 9.5 Z" fill="#000"/></svg>
<svg class="a" style="left:1789px;top:112px;" width="15" height="10" viewBox="0 0 15 10"><path d="M11.5 8 Q8 2 1 8" stroke="#3e3e3e" stroke-width="2.8" fill="none"/><path d="M15 2.5 L15 9.5 L8 9.5 Z" fill="#3e3e3e"/></svg>
<svg class="a" style="left:1811px;top:111px;" width="14" height="14" viewBox="0 0 14 14"><path d="M4 10 H3 Q1 10 1 8 V3 Q1 1 3 1 H11 Q13 1 13 3 V6" stroke="#000" stroke-width="2.2" fill="none"/><path d="M10 4 L15 7 L10 10 Z M5 8 L5 14 L9 11 Z" fill="#000"/></svg>
<svg class="a" style="left:1845px;top:112px;" width="9" height="12" viewBox="0 0 9 12"><path d="M1 3.5 Q1 0.5 4.5 0.5 Q8 0.5 8 3.5 Q8 5.5 5.5 6.5 V8" stroke="#000" stroke-width="2.2" fill="none"/><rect x="4" y="9.5" width="3" height="2.5" fill="#000"/></svg>
<svg class="a" style="left:1866px;top:112px;" width="11" height="11" viewBox="0 0 11 11"><rect x="1" y="4" width="6" height="6" fill="none" stroke="#000" stroke-width="1.6"/><path d="M4 4 V1 H10 V7 H7" stroke="#000" stroke-width="1.6" fill="none"/></svg>
<svg class="a" style="left:1884px;top:112px;" width="10" height="10" viewBox="0 0 10 10"><path d="M1 1 L9 9 M9 1 L1 9" stroke="#000" stroke-width="1.8"/></svg>
<div class="a" style="left:1311px;top:132px;width:81px;height:19px;background:#323232;border:1px solid #262626;border-bottom:none;border-radius:3px 3px 0 0"></div>
<div class="t" style="left:1321px;top:136px;font-size:12px;line-height:12px;color:#d8d8d8;letter-spacing:0.35px;">Transform</div>
<div class="a" style="left:1392px;top:134px;width:54px;height:17px;background:#2a2a2a;border:1px solid #262626;border-bottom:none;border-radius:3px 3px 0 0"></div>
<div class="t" style="left:1403px;top:138px;font-size:12px;line-height:12px;color:#cfcfcf;letter-spacing:0.35px;">Node</div>
<div class="a" style="left:1311px;top:151px;width:588px;height:307px;background:none;border-top:1px solid #262626"></div>
<div class="t" style="right:523px;top:167px;font-size:12px;line-height:12px;color:#cfcfcf;letter-spacing:0.7px;">translate</div>
<div class="t" style="left:1403px;top:167px;font-size:12px;line-height:12px;color:#cfcfcf;letter-spacing:0px;">x</div>
<div class="a" style="left:1411px;top:163px;width:74px;height:19px;background:#393939;border:1px solid #232323;border-radius:3px"></div>
<div class="t" style="left:1415px;top:167px;font-size:12px;line-height:12px;color:#d8d8d8;letter-spacing:0.3px;">335</div>
<div class="t" style="left:1487px;top:167px;font-size:12px;line-height:12px;color:#cfcfcf;letter-spacing:0px;">y</div>
<div class="a" style="left:1494px;top:163px;width:74px;height:19px;background:#393939;border:1px solid #232323;border-radius:3px"></div>
<div class="t" style="left:1498px;top:167px;font-size:12px;line-height:12px;color:#d8d8d8;letter-spacing:0.3px;">200</div>
<div class="a" style="left:1570px;top:163px;width:18px;height:19px;background:#3a3a3a;border:1px solid #262626;border-radius:3px"></div>
<svg class="a" style="left:1570px;top:163px;" width="18" height="19" viewBox="0 0 18 19"><path d="M4 15 Q6 4 9 9 Q12 14 14 4" stroke="#111" stroke-width="1.5" fill="none"/></svg>
<div class="t" style="right:523px;top:189px;font-size:12px;line-height:12px;color:#cfcfcf;letter-spacing:0.5px;">rotate</div>
<div class="a" style="left:1403px;top:185px;width:74px;height:19px;background:#393939;border:1px solid #232323;border-radius:3px"></div>
<div class="t" style="left:1407px;top:189px;font-size:12px;line-height:12px;color:#d8d8d8;letter-spacing:0.3px;">0</div>
<div class="a" style="left:1480px;top:193px;width:387px;height:2px;background:#0e0e0e;"></div>
<svg class="a" style="left:1480px;top:185px;" width="389" height="8" viewBox="0 0 389 8"><rect x="1" y="3" width="1" height="4" fill="#4e4e4e"/><rect x="12" y="3" width="1" height="4" fill="#4e4e4e"/><rect x="22" y="3" width="1" height="4" fill="#4e4e4e"/><rect x="33" y="3" width="1" height="4" fill="#4e4e4e"/><rect x="44" y="3" width="1" height="4" fill="#4e4e4e"/><rect x="54" y="3" width="1" height="4" fill="#4e4e4e"/><rect x="65" y="3" width="1" height="4" fill="#4e4e4e"/><rect x="76" y="3" width="1" height="4" fill="#4e4e4e"/><rect x="87" y="3" width="1" height="4" fill="#4e4e4e"/><rect x="97" y="3" width="1" height="4" fill="#4e4e4e"/><rect x="108" y="3" width="1" height="4" fill="#4e4e4e"/><rect x="119" y="3" width="1" height="4" fill="#4e4e4e"/><rect x="129" y="3" width="1" height="4" fill="#4e4e4e"/><rect x="140" y="3" width="1" height="4" fill="#4e4e4e"/><rect x="151" y="3" width="1" height="4" fill="#4e4e4e"/><rect x="162" y="3" width="1" height="4" fill="#4e4e4e"/><rect x="172" y="3" width="1" height="4" fill="#4e4e4e"/><rect x="183" y="3" width="1" height="4" fill="#4e4e4e"/><rect x="194" y="3" width="1" height="4" fill="#4e4e4e"/><rect x="204" y="3" width="1" height="4" fill="#4e4e4e"/><rect x="215" y="3" width="1" height="4" fill="#4e4e4e"/><rect x="226" y="3" width="1" height="4" fill="#4e4e4e"/><rect x="236" y="3" width="1" height="4" fill="#4e4e4e"/><rect x="247" y="3" width="1" height="4" fill="#4e4e4e"/><rect x="258" y="3" width="1" height="4" fill="#4e4e4e"/><rect x="268" y="3" width="1" height="4" fill="#4e4e4e"/><rect x="279" y="3" width="1" height="4" fill="#4e4e4e"/><rect x="290" y="3" width="1" height="4" fill="#4e4e4e"/><rect x="301" y="3" width="1" height="4" fill="#4e4e4e"/><rect x="311" y="3" width="1" height="4" fill="#4e4e4e"/><rect x="322" y="3" width="1" height="4" fill="#4e4e4e"/><rect x="333" y="3" width="1" height="4" fill="#4e4e4e"/><rect x="343" y="3" width="1" height="4" fill="#4e4e4e"/><rect x="354" y="3" width="1" height="4" fill="#4e4e4e"/><rect x="365" y="3" width="1" height="4" fill="#4e4e4e"/><rect x="376" y="3" width="1" height="4" fill="#4e4e4e"/><rect x="386" y="3" width="1" height="4" fill="#4e4e4e"/><rect x="1" y="0" width="1" height="7" fill="#555"/><rect x="32" y="0" width="1" height="7" fill="#555"/><rect x="87" y="0" width="1" height="7" fill="#555"/><rect x="139" y="0" width="1" height="7" fill="#555"/><rect x="195" y="0" width="1" height="7" fill="#555"/><rect x="252" y="0" width="1" height="7" fill="#555"/><rect x="309" y="0" width="1" height="7" fill="#555"/><rect x="361" y="0" width="1" height="7" fill="#555"/><rect x="379" y="0" width="1" height="7" fill="#555"/></svg>
<div class="t" style="left:1481px;top:195px;font-size:9.5px;line-height:9.5px;color:#141414;letter-spacing:-0.35px;">-180</div>
<div class="t" style="left:1512px;top:195px;font-size:9.5px;line-height:9.5px;color:#141414;letter-spacing:-0.35px;">-150</div>
<div class="t" style="left:1567px;top:195px;font-size:9.5px;line-height:9.5px;color:#141414;letter-spacing:-0.35px;">-100</div>
<div class="t" style="left:1619px;top:195px;font-size:9.5px;line-height:9.5px;color:#141414;letter-spacing:-0.35px;">-50</div>
<div class="t" style="left:1675px;top:195px;font-size:9.5px;line-height:9.5px;color:#141414;letter-spacing:-0.35px;">0</div>
<div class="t" style="left:1732px;top:195px;font-size:9.5px;line-height:9.5px;color:#141414;letter-spacing:-0.35px;">50</div>
<div class="t" style="left:1789px;top:195px;font-size:9.5px;line-height:9.5px;color:#141414;letter-spacing:-0.35px;">100</div>
<div class="t" style="left:1841px;top:195px;font-size:9.5px;line-height:9.5px;color:#141414;letter-spacing:-0.35px;">150</div>
<div class="t" style="left:1859px;top:195px;font-size:9.5px;line-height:9.5px;color:#141414;letter-spacing:-0.35px;">180</div>
<div class="a" style="left:1673px;top:188px;width:5px;height:9px;background:#7d6a35;border:1px solid #1e1a10"></div>
<div class="a" style="left:1869px;top:185px;width:18px;height:19px;background:#3a3a3a;border:1px solid #262626;border-radius:3px"></div>
<svg class="a" style="left:1869px;top:185px;" width="18" height="19" viewBox="0 0 18 19"><path d="M4 15 Q6 4 9 9 Q12 14 14 4" stroke="#111" stroke-width="1.5" fill="none"/></svg>
<div class="t" style="right:523px;top:211px;font-size:12px;line-height:12px;color:#cfcfcf;letter-spacing:0.5px;">scale</div>
<div class="a" style="left:1403px;top:207px;width:74px;height:19px;background:#393939;border:1px solid #232323;border-radius:3px"></div>
<div class="t" style="left:1407px;top:211px;font-size:12px;line-height:12px;color:#d8d8d8;letter-spacing:0.3px;">1.32</div>
<div class="a" style="left:1480px;top:215px;width:369px;height:2px;background:#0e0e0e;"></div>
<svg class="a" style="left:1480px;top:207px;" width="371" height="8" viewBox="0 0 371 8"><rect x="0" y="3" width="1" height="4" fill="#4e4e4e"/><rect x="32" y="3" width="1" height="4" fill="#4e4e4e"/><rect x="61" y="3" width="1" height="4" fill="#4e4e4e"/><rect x="93" y="3" width="1" height="4" fill="#4e4e4e"/><rect x="116" y="3" width="1" height="4" fill="#4e4e4e"/><rect x="128" y="3" width="1" height="4" fill="#4e4e4e"/><rect x="142" y="3" width="1" height="4" fill="#4e4e4e"/><rect x="156" y="3" width="1" height="4" fill="#4e4e4e"/><rect x="170" y="3" width="1" height="4" fill="#4e4e4e"/><rect x="184" y="3" width="1" height="4" fill="#4e4e4e"/><rect x="206" y="3" width="1" height="4" fill="#4e4e4e"/><rect x="241" y="3" width="1" height="4" fill="#4e4e4e"/><rect x="272" y="3" width="1" height="4" fill="#4e4e4e"/><rect x="296" y="3" width="1" height="4" fill="#4e4e4e"/><rect x="313" y="3" width="1" height="4" fill="#4e4e4e"/><rect x="325" y="3" width="1" height="4" fill="#4e4e4e"/><rect x="338" y="3" width="1" height="4" fill="#4e4e4e"/><rect x="350" y="3" width="1" height="4" fill="#4e4e4e"/><rect x="361" y="3" width="1" height="4" fill="#4e4e4e"/><rect x="0" y="0" width="1" height="7" fill="#555"/><rect x="61" y="0" width="1" height="7" fill="#555"/><rect x="93" y="0" width="1" height="7" fill="#555"/><rect x="116" y="0" width="1" height="7" fill="#555"/><rect x="142" y="0" width="1" height="7" fill="#555"/><rect x="184" y="0" width="1" height="7" fill="#555"/><rect x="241" y="0" width="1" height="7" fill="#555"/><rect x="272" y="0" width="1" height="7" fill="#555"/><rect x="296" y="0" width="1" height="7" fill="#555"/><rect x="325" y="0" width="1" height="7" fill="#555"/><rect x="361" y="0" width="1" height="7" fill="#555"/></svg>
<div class="t" style="left:1480px;top:217px;font-size:9.5px;line-height:9.5px;color:#141414;letter-spacing:-0.35px;">0.1</div>
<div class="t" style="left:1541px;top:217px;font-size:9.5px;line-height:9.5px;color:#141414;letter-spacing:-0.35px;">0.2</div>
<div class="t" style="left:1573px;top:217px;font-size:9.5px;line-height:9.5px;color:#141414;letter-spacing:-0.35px;">0.3</div>
<div class="t" style="left:1596px;top:217px;font-size:9.5px;line-height:9.5px;color:#141414;letter-spacing:-0.35px;">0.4</div>
<div class="t" style="left:1622px;top:217px;font-size:9.5px;line-height:9.5px;color:#141414;letter-spacing:-0.35px;">0.6</div>
<div class="t" style="left:1664px;top:217px;font-size:9.5px;line-height:9.5px;color:#141414;letter-spacing:-0.35px;">1</div>
<div class="t" style="left:1721px;top:217px;font-size:9.5px;line-height:9.5px;color:#141414;letter-spacing:-0.35px;">2</div>
<div class="t" style="left:1752px;top:217px;font-size:9.5px;line-height:9.5px;color:#141414;letter-spacing:-0.35px;">3</div>
<div class="t" style="left:1776px;top:217px;font-size:9.5px;line-height:9.5px;color:#141414;letter-spacing:-0.35px;">4</div>
<div class="t" style="left:1805px;top:217px;font-size:9.5px;line-height:9.5px;color:#141414;letter-spacing:-0.35px;">6</div>
<div class="t" style="left:1841px;top:217px;font-size:9.5px;line-height:9.5px;color:#141414;letter-spacing:-0.35px;">10</div>
<div class="a" style="left:1683px;top:210px;width:5px;height:9px;background:#7d6a35;border:1px solid #1e1a10"></div>
<div class="a" style="left:1850px;top:207px;width:18px;height:19px;background:#3c3c3c;border:1px solid #262626;border-radius:3px"></div>
<div class="t" style="left:1855px;top:211px;font-size:12px;line-height:12px;color:#e8e8e8;letter-spacing:0px;">2</div>
<div class="a" style="left:1869px;top:207px;width:18px;height:19px;background:#3a3a3a;border:1px solid #262626;border-radius:3px"></div>
<svg class="a" style="left:1869px;top:207px;" width="18" height="19" viewBox="0 0 18 19"><path d="M4 15 Q6 4 9 9 Q12 14 14 4" stroke="#111" stroke-width="1.5" fill="none"/></svg>
<div class="t" style="right:523px;top:233px;font-size:12px;line-height:12px;color:#cfcfcf;letter-spacing:0.6px;">skew X</div>
<div class="a" style="left:1403px;top:229px;width:74px;height:19px;background:#393939;border:1px solid #232323;border-radius:3px"></div>
<div class="t" style="left:1407px;top:233px;font-size:12px;line-height:12px;color:#d8d8d8;letter-spacing:0.3px;">0</div>
<div class="a" style="left:1480px;top:237px;width:387px;height:2px;background:#0e0e0e;"></div>
<svg class="a" style="left:1480px;top:229px;" width="389" height="8" viewBox="0 0 389 8"><rect x="1" y="3" width="1" height="4" fill="#4e4e4e"/><rect x="20" y="3" width="1" height="4" fill="#4e4e4e"/><rect x="40" y="3" width="1" height="4" fill="#4e4e4e"/><rect x="59" y="3" width="1" height="4" fill="#4e4e4e"/><rect x="78" y="3" width="1" height="4" fill="#4e4e4e"/><rect x="98" y="3" width="1" height="4" fill="#4e4e4e"/><rect x="117" y="3" width="1" height="4" fill="#4e4e4e"/><rect x="136" y="3" width="1" height="4" fill="#4e4e4e"/><rect x="156" y="3" width="1" height="4" fill="#4e4e4e"/><rect x="175" y="3" width="1" height="4" fill="#4e4e4e"/><rect x="194" y="3" width="1" height="4" fill="#4e4e4e"/><rect x="214" y="3" width="1" height="4" fill="#4e4e4e"/><rect x="233" y="3" width="1" height="4" fill="#4e4e4e"/><rect x="253" y="3" width="1" height="4" fill="#4e4e4e"/><rect x="272" y="3" width="1" height="4" fill="#4e4e4e"/><rect x="291" y="3" width="1" height="4" fill="#4e4e4e"/><rect x="311" y="3" width="1" height="4" fill="#4e4e4e"/><rect x="330" y="3" width="1" height="4" fill="#4e4e4e"/><rect x="349" y="3" width="1" height="4" fill="#4e4e4e"/><rect x="369" y="3" width="1" height="4" fill="#4e4e4e"/><rect x="388" y="3" width="1" height="4" fill="#4e4e4e"/><rect x="1" y="0" width="1" height="7" fill="#555"/><rect x="38" y="0" width="1" height="7" fill="#555"/><rect x="77" y="0" width="1" height="7" fill="#555"/><rect x="116" y="0" width="1" height="7" fill="#555"/><rect x="154" y="0" width="1" height="7" fill="#555"/><rect x="195" y="0" width="1" height="7" fill="#555"/><rect x="237" y="0" width="1" height="7" fill="#555"/><rect x="275" y="0" width="1" height="7" fill="#555"/><rect x="314" y="0" width="1" height="7" fill="#555"/><rect x="353" y="0" width="1" height="7" fill="#555"/><rect x="384" y="0" width="1" height="7" fill="#555"/></svg>
<div class="t" style="left:1481px;top:239px;font-size:9.5px;line-height:9.5px;color:#141414;letter-spacing:-0.35px;">-1</div>
<div class="t" style="left:1518px;top:239px;font-size:9.5px;line-height:9.5px;color:#141414;letter-spacing:-0.35px;">-0.8</div>
<div class="t" style="left:1557px;top:239px;font-size:9.5px;line-height:9.5px;color:#141414;letter-spacing:-0.35px;">-0.6</div>
<div class="t" style="left:1596px;top:239px;font-size:9.5px;line-height:9.5px;color:#141414;letter-spacing:-0.35px;">-0.4</div>
<div class="t" style="left:1634px;top:239px;font-size:9.5px;line-height:9.5px;color:#141414;letter-spacing:-0.35px;">-0.2</div>
<div class="t" style="left:1675px;top:239px;font-size:9.5px;line-height:9.5px;color:#141414;letter-spacing:-0.35px;">0</div>
<div class="t" style="left:1717px;top:239px;font-size:9.5px;line-height:9.5px;color:#141414;letter-spacing:-0.35px;">0.2</div>
<div class="t" style="left:1755px;top:239px;font-size:9.5px;line-height:9.5px;color:#141414;letter-spacing:-0.35px;">0.4</div>
<div class="t" style="left:1794px;top:239px;font-size:9.5px;line-height:9.5px;color:#141414;letter-spacing:-0.35px;">0.6</div>
<div class="t" style="left:1833px;top:239px;font-size:9.5px;line-height:9.5px;color:#141414;letter-spacing:-0.35px;">0.8</div>
<div class="t" style="left:1864px;top:239px;font-size:9.5px;line-height:9.5px;color:#141414;letter-spacing:-0.35px;">1</div>
<div class="a" style="left:1671px;top:232px;width:5px;height:9px;background:#7d6a35;border:1px solid #1e1a10"></div>
<div class="a" style="left:1869px;top:229px;width:18px;height:19px;background:#3a3a3a;border:1px solid #262626;border-radius:3px"></div>
<svg class="a" style="left:1869px;top:229px;" width="18" height="19" viewBox="0 0 18 19"><path d="M4 15 Q6 4 9 9 Q12 14 14 4" stroke="#111" stroke-width="1.5" fill="none"/></svg>
<div class="t" style="right:523px;top:255px;font-size:12px;line-height:12px;color:#cfcfcf;letter-spacing:0.6px;">skew Y</div>
<div class="a" style="left:1403px;top:251px;width:74px;height:19px;background:#393939;border:1px solid #232323;border-radius:3px"></div>
<div class="t" style="left:1407px;top:255px;font-size:12px;line-height:12px;color:#d8d8d8;letter-spacing:0.3px;">0</div>
<div class="a" style="left:1480px;top:259px;width:387px;height:2px;background:#0e0e0e;"></div>
<svg class="a" style="left:1480px;top:251px;" width="389" height="8" viewBox="0 0 389 8"><rect x="1" y="3" width="1" height="4" fill="#4e4e4e"/><rect x="20" y="3" width="1" height="4" fill="#4e4e4e"/><rect x="40" y="3" width="1" height="4" fill="#4e4e4e"/><rect x="59" y="3" width="1" height="4" fill="#4e4e4e"/><rect x="78" y="3" width="1" height="4" fill="#4e4e4e"/><rect x="98" y="3" width="1" height="4" fill="#4e4e4e"/><rect x="117" y="3" width="1" height="4" fill="#4e4e4e"/><rect x="136" y="3" width="1" height="4" fill="#4e4e4e"/><rect x="156" y="3" width="1" height="4" fill="#4e4e4e"/><rect x="175" y="3" width="1" height="4" fill="#4e4e4e"/><rect x="194" y="3" width="1" height="4" fill="#4e4e4e"/><rect x="214" y="3" width="1" height="4" fill="#4e4e4e"/><rect x="233" y="3" width="1" height="4" fill="#4e4e4e"/><rect x="253" y="3" width="1" height="4" fill="#4e4e4e"/><rect x="272" y="3" width="1" height="4" fill="#4e4e4e"/><rect x="291" y="3" width="1" height="4" fill="#4e4e4e"/><rect x="311" y="3" width="1" height="4" fill="#4e4e4e"/><rect x="330" y="3" width="1" height="4" fill="#4e4e4e"/><rect x="349" y="3" width="1" height="4" fill="#4e4e4e"/><rect x="369" y="3" width="1" height="4" fill="#4e4e4e"/><rect x="388" y="3" width="1" height="4" fill="#4e4e4e"/><rect x="1" y="0" width="1" height="7" fill="#555"/><rect x="38" y="0" width="1" height="7" fill="#555"/><rect x="77" y="0" width="1" height="7" fill="#555"/><rect x="116" y="0" width="1" height="7" fill="#555"/><rect x="154" y="0" width="1" height="7" fill="#555"/><rect x="195" y="0" width="1" height="7" fill="#555"/><rect x="237" y="0" width="1" height="7" fill="#555"/><rect x="275" y="0" width="1" height="7" fill="#555"/><rect x="314" y="0" width="1" height="7" fill="#555"/><rect x="353" y="0" width="1" height="7" fill="#555"/><rect x="384" y="0" width="1" height="7" fill="#555"/></svg>
<div class="t" style="left:1481px;top:261px;font-size:9.5px;line-height:9.5px;color:#141414;letter-spacing:-0.35px;">-1</div>
<div class="t" style="left:1518px;top:261px;font-size:9.5px;line-height:9.5px;color:#141414;letter-spacing:-0.35px;">-0.8</div>
<div class="t" style="left:1557px;top:261px;font-size:9.5px;line-height:9.5px;color:#141414;letter-spacing:-0.35px;">-0.6</div>
<div class="t" style="left:1596px;top:261px;font-size:9.5px;line-height:9.5px;color:#141414;letter-spacing:-0.35px;">-0.4</div>
<div class="t" style="left:1634px;top:261px;font-size:9.5px;line-height:9.5px;color:#141414;letter-spacing:-0.35px;">-0.2</div>
<div class="t" style="left:1675px;top:261px;font-size:9.5px;line-height:9.5px;color:#141414;letter-spacing:-0.35px;">0</div>
<div class="t" style="left:1717px;top:261px;font-size:9.5px;line-height:9.5px;color:#141414;letter-spacing:-0.35px;">0.2</div>
<div class="t" style="left:1755px;top:261px;font-size:9.5px;line-height:9.5px;color:#141414;letter-spacing:-0.35px;">0.4</div>
<div class="t" style="left:1794px;top:261px;font-size:9.5px;line-height:9.5px;color:#141414;letter-spacing:-0.35px;">0.6</div>
<div class="t" style="left:1833px;top:261px;font-size:9.5px;line-height:9.5px;color:#141414;letter-spacing:-0.35px;">0.8</div>
<div class="t" style="left:1864px;top:261px;font-size:9.5px;line-height:9.5px;color:#141414;letter-spacing:-0.35px;">1</div>
<div class="a" style="left:1671px;top:254px;width:5px;height:9px;background:#7d6a35;border:1px solid #1e1a10"></div>
<div class="a" style="left:1869px;top:251px;width:18px;height:19px;background:#3a3a3a;border:1px solid #262626;border-radius:3px"></div>
<svg class="a" style="left:1869px;top:251px;" width="18" height="19" viewBox="0 0 18 19"><path d="M4 15 Q6 4 9 9 Q12 14 14 4" stroke="#111" stroke-width="1.5" fill="none"/></svg>
<div class="t" style="right:523px;top:277px;font-size:12px;line-height:12px;color:#cfcfcf;letter-spacing:0.6px;">skew order</div>
<div class="a" style="left:1403px;top:273px;width:45px;height:19px;background:#3c3c3c;border:1px solid #232323;border-radius:3px"></div>
<div class="t" style="left:1408px;top:277px;font-size:12px;line-height:12px;color:#d8d8d8;letter-spacing:0.3px;">XY</div>
<svg class="a" style="left:1437px;top:280px;" width="6" height="3" viewBox="0 0 6 3"><path d="M0 0 H6 L3.0 3 Z" fill="#d0d0d0"/></svg>
<div class="t" style="right:523px;top:299px;font-size:12px;line-height:12px;color:#cfcfcf;letter-spacing:0.6px;">center</div>
<div class="t" style="left:1403px;top:299px;font-size:12px;line-height:12px;color:#cfcfcf;letter-spacing:0px;">x</div>
<div class="a" style="left:1411px;top:295px;width:74px;height:19px;background:#393939;border:1px solid #232323;border-radius:3px"></div>
<div class="t" style="left:1415px;top:299px;font-size:12px;line-height:12px;color:#d8d8d8;letter-spacing:0.3px;">2048</div>
<div class="t" style="left:1487px;top:299px;font-size:12px;line-height:12px;color:#cfcfcf;letter-spacing:0px;">y</div>
<div class="a" style="left:1494px;top:295px;width:74px;height:19px;background:#393939;border:1px solid #232323;border-radius:3px"></div>
<div class="t" style="left:1498px;top:299px;font-size:12px;line-height:12px;color:#d8d8d8;letter-spacing:0.3px;">1152</div>
<div class="a" style="left:1570px;top:295px;width:18px;height:19px;background:#3a3a3a;border:1px solid #262626;border-radius:3px"></div>
<svg class="a" style="left:1570px;top:295px;" width="18" height="19" viewBox="0 0 18 19"><path d="M4 15 Q6 4 9 9 Q12 14 14 4" stroke="#111" stroke-width="1.5" fill="none"/></svg>
<div class="a" style="left:1403px;top:318px;width:12px;height:12px;background:#353535;border:1px solid #232323;border-radius:2px"></div>
<div class="t" style="left:1421px;top:320px;font-size:12px;line-height:12px;color:#cfcfcf;letter-spacing:0.6px;">invert</div>
<div class="t" style="right:523px;top:340px;font-size:12px;line-height:12px;color:#cfcfcf;letter-spacing:0.6px;">filter</div>
<div class="a" style="left:1403px;top:337px;width:80px;height:19px;background:#3c3c3c;border:1px solid #232323;border-radius:3px"></div>
<div class="t" style="left:1408px;top:341px;font-size:12px;line-height:12px;color:#d8d8d8;letter-spacing:0.3px;">Cubic</div>
<svg class="a" style="left:1472px;top:344px;" width="6" height="3" viewBox="0 0 6 3"><path d="M0 0 H6 L3.0 3 Z" fill="#d0d0d0"/></svg>
<div class="a" style="left:1487px;top:339px;width:12px;height:12px;background:#353535;border:1px solid #232323;border-radius:2px"></div>
<div class="t" style="left:1504px;top:340px;font-size:12px;line-height:12px;color:#cfcfcf;letter-spacing:0.6px;">clamp</div>
<div class="a" style="left:1547px;top:339px;width:12px;height:12px;background:#353535;border:1px solid #232323;border-radius:2px"></div>
<svg class="a" style="left:1548px;top:340px;" width="10" height="10" viewBox="0 0 10 10"><path d="M1.5 1.5 L8.5 8.5 M8.5 1.5 L1.5 8.5" stroke="#f0f0f0" stroke-width="2.4"/></svg>
<div class="t" style="left:1564px;top:340px;font-size:12px;line-height:12px;color:#cfcfcf;letter-spacing:0.5px;">black outside</div>
<div class="t" style="right:523px;top:363px;font-size:12px;line-height:12px;color:#cfcfcf;letter-spacing:0.4px;">motionblur</div>
<div class="a" style="left:1403px;top:359px;width:74px;height:19px;background:#393939;border:1px solid #232323;border-radius:3px"></div>
<div class="t" style="left:1407px;top:363px;font-size:12px;line-height:12px;color:#d8d8d8;letter-spacing:0.3px;">0</div>
<div class="a" style="left:1480px;top:367px;width:387px;height:2px;background:#0e0e0e;"></div>
<svg class="a" style="left:1480px;top:359px;" width="389" height="8" viewBox="0 0 389 8"><rect x="1" y="3" width="1" height="4" fill="#4e4e4e"/><rect x="12" y="3" width="1" height="4" fill="#4e4e4e"/><rect x="20" y="3" width="1" height="4" fill="#4e4e4e"/><rect x="27" y="3" width="1" height="4" fill="#4e4e4e"/><rect x="34" y="3" width="1" height="4" fill="#4e4e4e"/><rect x="40" y="3" width="1" height="4" fill="#4e4e4e"/><rect x="46" y="3" width="1" height="4" fill="#4e4e4e"/><rect x="52" y="3" width="1" height="4" fill="#4e4e4e"/><rect x="58" y="3" width="1" height="4" fill="#4e4e4e"/><rect x="65" y="3" width="1" height="4" fill="#4e4e4e"/><rect x="100" y="3" width="1" height="4" fill="#4e4e4e"/><rect x="125" y="3" width="1" height="4" fill="#4e4e4e"/><rect x="145" y="3" width="1" height="4" fill="#4e4e4e"/><rect x="164" y="3" width="1" height="4" fill="#4e4e4e"/><rect x="180" y="3" width="1" height="4" fill="#4e4e4e"/><rect x="195" y="3" width="1" height="4" fill="#4e4e4e"/><rect x="274" y="3" width="1" height="4" fill="#4e4e4e"/><rect x="336" y="3" width="1" height="4" fill="#4e4e4e"/><rect x="383" y="3" width="1" height="4" fill="#4e4e4e"/><rect x="1" y="0" width="1" height="7" fill="#555"/><rect x="65" y="0" width="1" height="7" fill="#555"/><rect x="125" y="0" width="1" height="7" fill="#555"/><rect x="164" y="0" width="1" height="7" fill="#555"/><rect x="195" y="0" width="1" height="7" fill="#555"/><rect x="274" y="0" width="1" height="7" fill="#555"/><rect x="336" y="0" width="1" height="7" fill="#555"/><rect x="383" y="0" width="1" height="7" fill="#555"/></svg>
<div class="t" style="left:1481px;top:369px;font-size:9.5px;line-height:9.5px;color:#141414;letter-spacing:-0.35px;">0</div>
<div class="t" style="left:1545px;top:369px;font-size:9.5px;line-height:9.5px;color:#141414;letter-spacing:-0.35px;">0.1</div>
<div class="t" style="left:1605px;top:369px;font-size:9.5px;line-height:9.5px;color:#141414;letter-spacing:-0.35px;">0.4</div>
<div class="t" style="left:1644px;top:369px;font-size:9.5px;line-height:9.5px;color:#141414;letter-spacing:-0.35px;">0.7</div>
<div class="t" style="left:1675px;top:369px;font-size:9.5px;line-height:9.5px;color:#141414;letter-spacing:-0.35px;">1</div>
<div class="t" style="left:1754px;top:369px;font-size:9.5px;line-height:9.5px;color:#141414;letter-spacing:-0.35px;">2</div>
<div class="t" style="left:1816px;top:369px;font-size:9.5px;line-height:9.5px;color:#141414;letter-spacing:-0.35px;">3</div>
<div class="t" style="left:1863px;top:369px;font-size:9.5px;line-height:9.5px;color:#141414;letter-spacing:-0.35px;">4</div>
<div class="a" style="left:1479px;top:362px;width:5px;height:9px;background:#7d6a35;border:1px solid #1e1a10"></div>
<div class="a" style="left:1869px;top:359px;width:18px;height:19px;background:#3a3a3a;border:1px solid #262626;border-radius:3px"></div>
<svg class="a" style="left:1869px;top:359px;" width="18" height="19" viewBox="0 0 18 19"><path d="M4 15 Q6 4 9 9 Q12 14 14 4" stroke="#111" stroke-width="1.5" fill="none"/></svg>
<div class="t" style="right:523px;top:385px;font-size:12px;line-height:12px;color:#cfcfcf;letter-spacing:0.6px;">shutter</div>
<div class="a" style="left:1403px;top:381px;width:74px;height:19px;background:#393939;border:1px solid #232323;border-radius:3px"></div>
<div class="t" style="left:1407px;top:385px;font-size:12px;line-height:12px;color:#d8d8d8;letter-spacing:0.3px;">0.5</div>
<div class="a" style="left:1480px;top:389px;width:387px;height:2px;background:#0e0e0e;"></div>
<svg class="a" style="left:1480px;top:381px;" width="389" height="8" viewBox="0 0 389 8"><rect x="1" y="3" width="1" height="4" fill="#4e4e4e"/><rect x="20" y="3" width="1" height="4" fill="#4e4e4e"/><rect x="40" y="3" width="1" height="4" fill="#4e4e4e"/><rect x="59" y="3" width="1" height="4" fill="#4e4e4e"/><rect x="78" y="3" width="1" height="4" fill="#4e4e4e"/><rect x="98" y="3" width="1" height="4" fill="#4e4e4e"/><rect x="117" y="3" width="1" height="4" fill="#4e4e4e"/><rect x="136" y="3" width="1" height="4" fill="#4e4e4e"/><rect x="156" y="3" width="1" height="4" fill="#4e4e4e"/><rect x="175" y="3" width="1" height="4" fill="#4e4e4e"/><rect x="194" y="3" width="1" height="4" fill="#4e4e4e"/><rect x="214" y="3" width="1" height="4" fill="#4e4e4e"/><rect x="233" y="3" width="1" height="4" fill="#4e4e4e"/><rect x="253" y="3" width="1" height="4" fill="#4e4e4e"/><rect x="272" y="3" width="1" height="4" fill="#4e4e4e"/><rect x="291" y="3" width="1" height="4" fill="#4e4e4e"/><rect x="311" y="3" width="1" height="4" fill="#4e4e4e"/><rect x="330" y="3" width="1" height="4" fill="#4e4e4e"/><rect x="349" y="3" width="1" height="4" fill="#4e4e4e"/><rect x="369" y="3" width="1" height="4" fill="#4e4e4e"/><rect x="388" y="3" width="1" height="4" fill="#4e4e4e"/><rect x="1" y="0" width="1" height="7" fill="#555"/><rect x="44" y="0" width="1" height="7" fill="#555"/><rect x="83" y="0" width="1" height="7" fill="#555"/><rect x="122" y="0" width="1" height="7" fill="#555"/><rect x="161" y="0" width="1" height="7" fill="#555"/><rect x="195" y="0" width="1" height="7" fill="#555"/><rect x="237" y="0" width="1" height="7" fill="#555"/><rect x="276" y="0" width="1" height="7" fill="#555"/><rect x="315" y="0" width="1" height="7" fill="#555"/><rect x="354" y="0" width="1" height="7" fill="#555"/><rect x="383" y="0" width="1" height="7" fill="#555"/></svg>
<div class="t" style="left:1481px;top:391px;font-size:9.5px;line-height:9.5px;color:#141414;letter-spacing:-0.35px;">0</div>
<div class="t" style="left:1524px;top:391px;font-size:9.5px;line-height:9.5px;color:#141414;letter-spacing:-0.35px;">0.2</div>
<div class="t" style="left:1563px;top:391px;font-size:9.5px;line-height:9.5px;color:#141414;letter-spacing:-0.35px;">0.4</div>
<div class="t" style="left:1602px;top:391px;font-size:9.5px;line-height:9.5px;color:#141414;letter-spacing:-0.35px;">0.6</div>
<div class="t" style="left:1641px;top:391px;font-size:9.5px;line-height:9.5px;color:#141414;letter-spacing:-0.35px;">0.8</div>
<div class="t" style="left:1675px;top:391px;font-size:9.5px;line-height:9.5px;color:#141414;letter-spacing:-0.35px;">1</div>
<div class="t" style="left:1717px;top:391px;font-size:9.5px;line-height:9.5px;color:#141414;letter-spacing:-0.35px;">1.2</div>
<div class="t" style="left:1756px;top:391px;font-size:9.5px;line-height:9.5px;color:#141414;letter-spacing:-0.35px;">1.4</div>
<div class="t" style="left:1795px;top:391px;font-size:9.5px;line-height:9.5px;color:#141414;letter-spacing:-0.35px;">1.6</div>
<div class="t" style="left:1834px;top:391px;font-size:9.5px;line-height:9.5px;color:#141414;letter-spacing:-0.35px;">1.8</div>
<div class="t" style="left:1863px;top:391px;font-size:9.5px;line-height:9.5px;color:#141414;letter-spacing:-0.35px;">2</div>
<div class="a" style="left:1574px;top:384px;width:5px;height:9px;background:#7d6a35;border:1px solid #1e1a10"></div>
<div class="a" style="left:1869px;top:381px;width:18px;height:19px;background:#3a3a3a;border:1px solid #262626;border-radius:3px"></div>
<svg class="a" style="left:1869px;top:381px;" width="18" height="19" viewBox="0 0 18 19"><path d="M4 15 Q6 4 9 9 Q12 14 14 4" stroke="#111" stroke-width="1.5" fill="none"/></svg>
<div class="t" style="right:523px;top:407px;font-size:12px;line-height:12px;color:#cfcfcf;letter-spacing:0.5px;">shutter offset</div>
<div class="a" style="left:1403px;top:403px;width:71px;height:19px;background:#3c3c3c;border:1px solid #232323;border-radius:3px"></div>
<div class="t" style="left:1408px;top:407px;font-size:12px;line-height:12px;color:#d8d8d8;letter-spacing:0.3px;">start</div>
<svg class="a" style="left:1463px;top:410px;" width="6" height="3" viewBox="0 0 6 3"><path d="M0 0 H6 L3.0 3 Z" fill="#d0d0d0"/></svg>
<div class="a" style="left:1478px;top:403px;width:73px;height:19px;background:#353535;border:1px solid #232323;border-radius:3px"></div>
<div class="t" style="left:1482px;top:407px;font-size:12px;line-height:12px;color:#666;letter-spacing:0.3px;">0</div>
<div class="a" style="left:1554px;top:411px;width:313px;height:2px;background:#0e0e0e;"></div>
<svg class="a" style="left:1554px;top:403px;" width="315" height="8" viewBox="0 0 315 8"><rect x="1" y="3" width="1" height="4" fill="#4e4e4e"/><rect x="16" y="3" width="1" height="4" fill="#4e4e4e"/><rect x="32" y="3" width="1" height="4" fill="#4e4e4e"/><rect x="47" y="3" width="1" height="4" fill="#4e4e4e"/><rect x="63" y="3" width="1" height="4" fill="#4e4e4e"/><rect x="78" y="3" width="1" height="4" fill="#4e4e4e"/><rect x="93" y="3" width="1" height="4" fill="#4e4e4e"/><rect x="109" y="3" width="1" height="4" fill="#4e4e4e"/><rect x="124" y="3" width="1" height="4" fill="#4e4e4e"/><rect x="140" y="3" width="1" height="4" fill="#4e4e4e"/><rect x="155" y="3" width="1" height="4" fill="#4e4e4e"/><rect x="170" y="3" width="1" height="4" fill="#4e4e4e"/><rect x="186" y="3" width="1" height="4" fill="#4e4e4e"/><rect x="201" y="3" width="1" height="4" fill="#4e4e4e"/><rect x="217" y="3" width="1" height="4" fill="#4e4e4e"/><rect x="232" y="3" width="1" height="4" fill="#4e4e4e"/><rect x="247" y="3" width="1" height="4" fill="#4e4e4e"/><rect x="263" y="3" width="1" height="4" fill="#4e4e4e"/><rect x="278" y="3" width="1" height="4" fill="#4e4e4e"/><rect x="294" y="3" width="1" height="4" fill="#4e4e4e"/><rect x="309" y="3" width="1" height="4" fill="#4e4e4e"/><rect x="1" y="0" width="1" height="7" fill="#555"/><rect x="31" y="0" width="1" height="7" fill="#555"/><rect x="62" y="0" width="1" height="7" fill="#555"/><rect x="93" y="0" width="1" height="7" fill="#555"/><rect x="123" y="0" width="1" height="7" fill="#555"/><rect x="156" y="0" width="1" height="7" fill="#555"/><rect x="190" y="0" width="1" height="7" fill="#555"/><rect x="221" y="0" width="1" height="7" fill="#555"/><rect x="252" y="0" width="1" height="7" fill="#555"/><rect x="283" y="0" width="1" height="7" fill="#555"/><rect x="309" y="0" width="1" height="7" fill="#555"/></svg>
<div class="t" style="left:1555px;top:413px;font-size:9.5px;line-height:9.5px;color:#141414;letter-spacing:-0.35px;">-1</div>
<div class="t" style="left:1585px;top:413px;font-size:9.5px;line-height:9.5px;color:#141414;letter-spacing:-0.35px;">-0.8</div>
<div class="t" style="left:1616px;top:413px;font-size:9.5px;line-height:9.5px;color:#141414;letter-spacing:-0.35px;">-0.6</div>
<div class="t" style="left:1647px;top:413px;font-size:9.5px;line-height:9.5px;color:#141414;letter-spacing:-0.35px;">-0.4</div>
<div class="t" style="left:1677px;top:413px;font-size:9.5px;line-height:9.5px;color:#141414;letter-spacing:-0.35px;">-0.2</div>
<div class="t" style="left:1710px;top:413px;font-size:9.5px;line-height:9.5px;color:#141414;letter-spacing:-0.35px;">0</div>
<div class="t" style="left:1744px;top:413px;font-size:9.5px;line-height:9.5px;color:#141414;letter-spacing:-0.35px;">0.2</div>
<div class="t" style="left:1775px;top:413px;font-size:9.5px;line-height:9.5px;color:#141414;letter-spacing:-0.35px;">0.4</div>
<div class="t" style="left:1806px;top:413px;font-size:9.5px;line-height:9.5px;color:#141414;letter-spacing:-0.35px;">0.6</div>
<div class="t" style="left:1837px;top:413px;font-size:9.5px;line-height:9.5px;color:#141414;letter-spacing:-0.35px;">0.8</div>
<div class="t" style="left:1863px;top:413px;font-size:9.5px;line-height:9.5px;color:#141414;letter-spacing:-0.35px;">1</div>
<div class="a" style="left:1708px;top:406px;width:5px;height:9px;background:#7d6a35;border:1px solid #1e1a10"></div>
<div class="a" style="left:1869px;top:403px;width:18px;height:19px;background:#3a3a3a;border:1px solid #262626;border-radius:3px"></div>
<svg class="a" style="left:1889px;top:447px;" width="9" height="9" viewBox="0 0 9 9"><path d="M8 1 L1 8 M8 4 L4 8 M8 7 L7 8" stroke="#666" stroke-width="1"/></svg>
<div class="a" style="left:1310px;top:464px;width:589px;height:2px;background:#b07ab8;"></div>
<div class="a" style="left:1310px;top:466px;width:589px;height:23px;background:linear-gradient(#3a3a3a,#2c2c2c);border-bottom:1px solid #1e1e1e"></div>
<svg class="a" style="left:1316px;top:473px;" width="10" height="8" viewBox="0 0 10 8"><path d="M0 0 H10 L5 8 Z" fill="#000"/></svg>
<div class="a" style="left:1334px;top:468px;width:68px;height:20px;background:#454545;border:1px solid #222;border-radius:3px"></div>
<div class="a" style="left:1356px;top:468px;width:1px;height:20px;background:#222;"></div>
<div class="a" style="left:1379px;top:468px;width:1px;height:20px;background:#222;"></div>
<svg class="a" style="left:1339px;top:472px;" width="12" height="12" viewBox="0 0 12 12"><circle cx="6" cy="6" r="4.6" fill="none" stroke="#000" stroke-width="1.8"/><circle cx="6" cy="6" r="2.8" fill="none" stroke="#e8e8e8" stroke-width="1"/><circle cx="6" cy="6" r="1.3" fill="#000"/></svg>
<svg class="a" style="left:1360px;top:470px;" width="16" height="15" viewBox="0 0 16 15"><path d="M4 0 L7 5 M12 0 L9 5" stroke="#000" stroke-width="1.3"/><rect x="1" y="5" width="14" height="7" rx="1" fill="#000"/><path d="M6.5 12 L8 14 L9.5 12 Z" fill="#000"/></svg>
<svg class="a" style="left:1383px;top:469px;" width="14" height="18" viewBox="0 0 14 18"><path d="M3.5 1 Q0 4 1 8 Q2 10.5 4.5 11 V17 H9.5 V11 Q12 10.5 13 8 Q14 4 10.5 1 L10.5 5 Q9.5 6.5 7 6.5 Q4.5 6.5 3.5 5 Z" fill="#000"/></svg>
<div class="a" style="left:1413px;top:468px;width:293px;height:20px;background:#3a3a3a;border:1px solid #222;border-radius:3px"></div>
<div class="t" style="left:1418px;top:473px;font-size:12px;line-height:12px;color:#d8d8d8;letter-spacing:0.5px;">Reformat1</div>
<div class="a" style="left:1716px;top:468px;width:114px;height:20px;background:#454545;border:1px solid #222;border-radius:3px"></div>
<div class="a" style="left:1738px;top:468px;width:1px;height:20px;background:#222;"></div>
<div class="a" style="left:1761px;top:468px;width:1px;height:20px;background:#222;"></div>
<div class="a" style="left:1784px;top:468px;width:1px;height:20px;background:#222;"></div>
<div class="a" style="left:1807px;top:468px;width:1px;height:20px;background:#222;"></div>
<svg class="a" style="left:1721px;top:472px;" width="11" height="11" viewBox="0 0 11 11"><rect x="0.8" y="0.8" width="9.4" height="9.4" fill="#b07ab8" stroke="#000" stroke-width="1.4"/><path d="M1 10 L10 1" stroke="#000" stroke-width="1.3"/></svg>
<svg class="a" style="left:1743px;top:472px;" width="11" height="11" viewBox="0 0 11 11"><rect x="0.8" y="0.8" width="9.4" height="9.4" fill="#d8d8d8" stroke="#000" stroke-width="1.4"/><path d="M1 10 L10 1" stroke="#000" stroke-width="1.3"/></svg>
<svg class="a" style="left:1765px;top:472px;" width="15" height="10" viewBox="0 0 15 10"><path d="M3.5 8 Q7 2 14 8" stroke="#3a3a3a" stroke-width="2.8" fill="none"/><path d="M0 2.5 L0 9.5 L7 9.5 Z" fill="#3a3a3a"/></svg>
<svg class="a" style="left:1789px;top:472px;" width="15" height="10" viewBox="0 0 15 10"><path d="M11.5 8 Q8 2 1 8" stroke="#3e3e3e" stroke-width="2.8" fill="none"/><path d="M15 2.5 L15 9.5 L8 9.5 Z" fill="#3e3e3e"/></svg>
<svg class="a" style="left:1811px;top:471px;" width="14" height="14" viewBox="0 0 14 14"><path d="M4 10 H3 Q1 10 1 8 V3 Q1 1 3 1 H11 Q13 1 13 3 V6" stroke="#3a3a3a" stroke-width="2.2" fill="none"/><path d="M10 4 L15 7 L10 10 Z M5 8 L5 14 L9 11 Z" fill="#3a3a3a"/></svg>
<svg class="a" style="left:1845px;top:472px;" width="9" height="12" viewBox="0 0 9 12"><path d="M1 3.5 Q1 0.5 4.5 0.5 Q8 0.5 8 3.5 Q8 5.5 5.5 6.5 V8" stroke="#000" stroke-width="2.2" fill="none"/><rect x="4" y="9.5" width="3" height="2.5" fill="#000"/></svg>
<svg class="a" style="left:1866px;top:472px;" width="11" height="11" viewBox="0 0 11 11"><rect x="1" y="4" width="6" height="6" fill="none" stroke="#000" stroke-width="1.6"/><path d="M4 4 V1 H10 V7 H7" stroke="#000" stroke-width="1.6" fill="none"/></svg>
<svg class="a" style="left:1884px;top:472px;" width="10" height="10" viewBox="0 0 10 10"><path d="M1 1 L9 9 M9 1 L1 9" stroke="#000" stroke-width="1.8"/></svg>
<div class="a" style="left:1311px;top:492px;width:76px;height:19px;background:#323232;border:1px solid #262626;border-bottom:none;border-radius:3px 3px 0 0"></div>
<div class="t" style="left:1321px;top:496px;font-size:12px;line-height:12px;color:#d8d8d8;letter-spacing:0.35px;">Reformat</div>
<div class="a" style="left:1387px;top:494px;width:52px;height:17px;background:#2a2a2a;border:1px solid #262626;border-bottom:none;border-radius:3px 3px 0 0"></div>
<div class="t" style="left:1398px;top:498px;font-size:12px;line-height:12px;color:#cfcfcf;letter-spacing:0.35px;">Node</div>
<div class="a" style="left:1311px;top:511px;width:588px;height:185px;background:#323232;border:1px solid #262626;border-radius:0 3px 3px 3px"></div>
<div class="t" style="right:521px;top:527px;font-size:12px;line-height:12px;color:#cfcfcf;letter-spacing:0.6px;">type</div>
<div class="a" style="left:1405px;top:522px;width:82px;height:19px;background:#3c3c3c;border:1px solid #232323;border-radius:3px"></div>
<div class="t" style="left:1410px;top:526px;font-size:12px;line-height:12px;color:#d8d8d8;letter-spacing:0.3px;">to format</div>
<svg class="a" style="left:1476px;top:529px;" width="6" height="3" viewBox="0 0 6 3"><path d="M0 0 H6 L3.0 3 Z" fill="#d0d0d0"/></svg>
<div class="t" style="right:521px;top:549px;font-size:12px;line-height:12px;color:#cfcfcf;letter-spacing:0.5px;">output format</div>
<div class="a" style="left:1405px;top:544px;width:131px;height:19px;background:#3c3c3c;border:1px solid #232323;border-radius:3px"></div>
<div class="t" style="left:1410px;top:548px;font-size:12px;line-height:12px;color:#d8d8d8;letter-spacing:0.3px;">footage 4096x2304</div>
<svg class="a" style="left:1525px;top:551px;" width="6" height="3" viewBox="0 0 6 3"><path d="M0 0 H6 L3.0 3 Z" fill="#d0d0d0"/></svg>
<div class="a" style="left:1539px;top:547px;width:17px;height:16px;background:#3a3a3a;border:1px solid #232323;border-radius:3px"></div>
<div class="a" style="left:1544px;top:555px;width:7px;height:1px;background:#d0d0d0;"></div>
<div class="a" style="left:1544px;top:558px;width:7px;height:1px;background:#d0d0d0;"></div>
<div class="a" style="left:1321px;top:580px;width:567px;height:1px;background:#262626;"></div>
<div class="a" style="left:1321px;top:581px;width:567px;height:1px;background:#3a3a3a;"></div>
<div class="t" style="right:521px;top:595px;font-size:12px;line-height:12px;color:#cfcfcf;letter-spacing:0.5px;">resize type</div>
<div class="a" style="left:1405px;top:591px;width:65px;height:19px;background:#3c3c3c;border:1px solid #232323;border-radius:3px"></div>
<div class="t" style="left:1410px;top:595px;font-size:12px;line-height:12px;color:#d8d8d8;letter-spacing:0.3px;">width</div>
<svg class="a" style="left:1459px;top:598px;" width="6" height="3" viewBox="0 0 6 3"><path d="M0 0 H6 L3.0 3 Z" fill="#d0d0d0"/></svg>
<div class="a" style="left:1474px;top:594px;width:12px;height:12px;background:#353535;border:1px solid #232323;border-radius:2px"></div>
<svg class="a" style="left:1475px;top:595px;" width="10" height="10" viewBox="0 0 10 10"><path d="M1.5 1.5 L8.5 8.5 M8.5 1.5 L1.5 8.5" stroke="#f0f0f0" stroke-width="2.4"/></svg>
<div class="t" style="left:1491px;top:595px;font-size:12px;line-height:12px;color:#cfcfcf;letter-spacing:0.6px;">center</div>
<div class="a" style="left:1535px;top:594px;width:12px;height:12px;background:#353535;border:1px solid #232323;border-radius:2px"></div>
<div class="t" style="left:1552px;top:595px;font-size:12px;line-height:12px;color:#cfcfcf;letter-spacing:0.6px;">flip</div>
<div class="a" style="left:1578px;top:594px;width:12px;height:12px;background:#353535;border:1px solid #232323;border-radius:2px"></div>
<div class="t" style="left:1595px;top:595px;font-size:12px;line-height:12px;color:#cfcfcf;letter-spacing:0.6px;">flop</div>
<div class="a" style="left:1625px;top:594px;width:12px;height:12px;background:#353535;border:1px solid #232323;border-radius:2px"></div>
<div class="t" style="left:1642px;top:595px;font-size:12px;line-height:12px;color:#cfcfcf;letter-spacing:0.6px;">turn</div>
<div class="t" style="right:521px;top:617px;font-size:12px;line-height:12px;color:#cfcfcf;letter-spacing:0.6px;">filter</div>
<div class="a" style="left:1405px;top:613px;width:80px;height:19px;background:#3c3c3c;border:1px solid #232323;border-radius:3px"></div>
<div class="t" style="left:1410px;top:617px;font-size:12px;line-height:12px;color:#d8d8d8;letter-spacing:0.3px;">Cubic</div>
<svg class="a" style="left:1474px;top:620px;" width="6" height="3" viewBox="0 0 6 3"><path d="M0 0 H6 L3.0 3 Z" fill="#d0d0d0"/></svg>
<div class="a" style="left:1489px;top:616px;width:12px;height:12px;background:#353535;border:1px solid #232323;border-radius:2px"></div>
<div class="t" style="left:1506px;top:617px;font-size:12px;line-height:12px;color:#cfcfcf;letter-spacing:0.6px;">clamp</div>
<div class="a" style="left:1548px;top:616px;width:12px;height:12px;background:#353535;border:1px solid #232323;border-radius:2px"></div>
<div class="t" style="left:1565px;top:617px;font-size:12px;line-height:12px;color:#cfcfcf;letter-spacing:0.5px;">black outside</div>
<div class="a" style="left:1649px;top:616px;width:12px;height:12px;background:#353535;border:1px solid #232323;border-radius:2px"></div>
<div class="t" style="left:1667px;top:617px;font-size:12px;line-height:12px;color:#cfcfcf;letter-spacing:0.5px;">preserve bounding box</div>
<svg class="a" style="left:1886px;top:684px;" width="10" height="10" viewBox="0 0 10 10"><path d="M9 1 L1 9 M9 4 L4 9 M9 7 L7 9" stroke="#666" stroke-width="1"/></svg>
<div class="a" style="left:1310px;top:700px;width:589px;height:2px;background:#c8c8c8;"></div>
<div class="a" style="left:1310px;top:704px;width:589px;height:23px;background:linear-gradient(#3a3a3a,#2c2c2c);border-bottom:1px solid #1e1e1e"></div>
<svg class="a" style="left:1316px;top:711px;" width="10" height="8" viewBox="0 0 10 8"><path d="M0 0 H10 L5 8 Z" fill="#000"/></svg>
<div class="a" style="left:1334px;top:706px;width:68px;height:20px;background:#454545;border:1px solid #222;border-radius:3px"></div>
<div class="a" style="left:1356px;top:706px;width:1px;height:20px;background:#222;"></div>
<div class="a" style="left:1379px;top:706px;width:1px;height:20px;background:#222;"></div>
<svg class="a" style="left:1339px;top:710px;" width="12" height="12" viewBox="0 0 12 12"><circle cx="6" cy="6" r="4.6" fill="none" stroke="#000" stroke-width="1.8"/><circle cx="6" cy="6" r="2.8" fill="none" stroke="#e8e8e8" stroke-width="1"/><circle cx="6" cy="6" r="1.3" fill="#000"/></svg>
<svg class="a" style="left:1360px;top:708px;" width="16" height="15" viewBox="0 0 16 15"><path d="M4 0 L7 5 M12 0 L9 5" stroke="#000" stroke-width="1.3"/><rect x="1" y="5" width="14" height="7" rx="1" fill="#000"/><path d="M6.5 12 L8 14 L9.5 12 Z" fill="#000"/></svg>
<svg class="a" style="left:1383px;top:707px;" width="14" height="18" viewBox="0 0 14 18"><path d="M3.5 1 Q0 4 1 8 Q2 10.5 4.5 11 V17 H9.5 V11 Q12 10.5 13 8 Q14 4 10.5 1 L10.5 5 Q9.5 6.5 7 6.5 Q4.5 6.5 3.5 5 Z" fill="#000"/></svg>
<div class="a" style="left:1413px;top:706px;width:293px;height:20px;background:#3a3a3a;border:1px solid #222;border-radius:3px"></div>
<div class="t" style="left:1418px;top:711px;font-size:12px;line-height:12px;color:#d8d8d8;letter-spacing:0.5px;">Read14</div>
<div class="a" style="left:1716px;top:706px;width:114px;height:20px;background:#454545;border:1px solid #222;border-radius:3px"></div>
<div class="a" style="left:1738px;top:706px;width:1px;height:20px;background:#222;"></div>
<div class="a" style="left:1761px;top:706px;width:1px;height:20px;background:#222;"></div>
<div class="a" style="left:1784px;top:706px;width:1px;height:20px;background:#222;"></div>
<div class="a" style="left:1807px;top:706px;width:1px;height:20px;background:#222;"></div>
<svg class="a" style="left:1721px;top:710px;" width="11" height="11" viewBox="0 0 11 11"><rect x="0.8" y="0.8" width="9.4" height="9.4" fill="#d8d8d8" stroke="#000" stroke-width="1.4"/><path d="M1 10 L10 1" stroke="#000" stroke-width="1.3"/></svg>
<svg class="a" style="left:1743px;top:710px;" width="11" height="11" viewBox="0 0 11 11"><rect x="0.8" y="0.8" width="9.4" height="9.4" fill="#d8d8d8" stroke="#000" stroke-width="1.4"/><path d="M1 10 L10 1" stroke="#000" stroke-width="1.3"/></svg>
<svg class="a" style="left:1765px;top:710px;" width="15" height="10" viewBox="0 0 15 10"><path d="M3.5 8 Q7 2 14 8" stroke="#3a3a3a" stroke-width="2.8" fill="none"/><path d="M0 2.5 L0 9.5 L7 9.5 Z" fill="#3a3a3a"/></svg>
<svg class="a" style="left:1789px;top:710px;" width="15" height="10" viewBox="0 0 15 10"><path d="M11.5 8 Q8 2 1 8" stroke="#3e3e3e" stroke-width="2.8" fill="none"/><path d="M15 2.5 L15 9.5 L8 9.5 Z" fill="#3e3e3e"/></svg>
<svg class="a" style="left:1811px;top:709px;" width="14" height="14" viewBox="0 0 14 14"><path d="M4 10 H3 Q1 10 1 8 V3 Q1 1 3 1 H11 Q13 1 13 3 V6" stroke="#3a3a3a" stroke-width="2.2" fill="none"/><path d="M10 4 L15 7 L10 10 Z M5 8 L5 14 L9 11 Z" fill="#3a3a3a"/></svg>
<svg class="a" style="left:1845px;top:710px;" width="9" height="12" viewBox="0 0 9 12"><path d="M1 3.5 Q1 0.5 4.5 0.5 Q8 0.5 8 3.5 Q8 5.5 5.5 6.5 V8" stroke="#000" stroke-width="2.2" fill="none"/><rect x="4" y="9.5" width="3" height="2.5" fill="#000"/></svg>
<svg class="a" style="left:1866px;top:710px;" width="11" height="11" viewBox="0 0 11 11"><rect x="1" y="4" width="6" height="6" fill="none" stroke="#000" stroke-width="1.6"/><path d="M4 4 V1 H10 V7 H7" stroke="#000" stroke-width="1.6" fill="none"/></svg>
<svg class="a" style="left:1884px;top:710px;" width="10" height="10" viewBox="0 0 10 10"><path d="M1 1 L9 9 M9 1 L1 9" stroke="#000" stroke-width="1.8"/></svg>
<div class="a" style="left:1311px;top:730px;width:52px;height:19px;background:#323232;border:1px solid #262626;border-bottom:none;border-radius:3px 3px 0 0"></div>
<div class="t" style="left:1321px;top:734px;font-size:12px;line-height:12px;color:#d8d8d8;letter-spacing:0.35px;">Read</div>
<div class="a" style="left:1363px;top:732px;width:57px;height:17px;background:#2a2a2a;border:1px solid #262626;border-bottom:none;border-radius:3px 3px 0 0"></div>
<div class="t" style="left:1374px;top:736px;font-size:12px;line-height:12px;color:#cfcfcf;letter-spacing:0.35px;">OCIO</div>
<div class="a" style="left:1420px;top:732px;width:80px;height:17px;background:#2a2a2a;border:1px solid #262626;border-bottom:none;border-radius:3px 3px 0 0"></div>
<div class="t" style="left:1431px;top:736px;font-size:12px;line-height:12px;color:#cfcfcf;letter-spacing:0.35px;">Sequence</div>
<div class="a" style="left:1500px;top:732px;width:76px;height:17px;background:#2a2a2a;border:1px solid #262626;border-bottom:none;border-radius:3px 3px 0 0"></div>
<div class="t" style="left:1511px;top:736px;font-size:12px;line-height:12px;color:#cfcfcf;letter-spacing:0.35px;">Metadata</div>
<div class="a" style="left:1576px;top:732px;width:51px;height:17px;background:#2a2a2a;border:1px solid #262626;border-bottom:none;border-radius:3px 3px 0 0"></div>
<div class="t" style="left:1587px;top:736px;font-size:12px;line-height:12px;color:#cfcfcf;letter-spacing:0.35px;">Node</div>
<div class="a" style="left:1311px;top:749px;width:588px;height:270px;background:#323232;border:1px solid #262626;border-bottom:none;border-radius:0 3px 0 0"></div>
<div class="t" style="right:496px;top:764px;font-size:12px;line-height:12px;color:#cfcfcf;letter-spacing:0.6px;">File</div>
<div class="a" style="left:1430px;top:760px;width:436px;height:19px;background:#393939;border:1px solid #232323;border-radius:3px"></div>
<div class="t" style="left:1434px;top:764px;font-size:12px;line-height:12px;color:#d8d8d8;letter-spacing:0.3px;">_effects/01-VFX_Fundamentals/03-TASKS/Keying-walking/footage/bg2.JPG</div>
<div class="a" style="left:1873px;top:761px;width:15px;height:15px;background:#4a4a4a;border:1px solid #1e1e1e;border-radius:3px"></div>
<svg class="a" style="left:1874px;top:762px;" width="13" height="13" viewBox="0 0 13 13"><path d="M2 1.5 H5 L6 2.5 H12 V4 H2 Z" fill="#e8e8e8"/><path d="M1 4 H10 L12 12 H3 Z" fill="#000"/><path d="M10 4 H12 V12 Z" fill="#e0e0e0"/></svg>
<div class="t" style="right:496px;top:786px;font-size:12px;line-height:12px;color:#cfcfcf;letter-spacing:0.5px;">Localization Policy</div>
<div class="a" style="left:1430px;top:782px;width:160px;height:19px;background:#3c3c3c;border:1px solid #232323;border-radius:3px"></div>
<div class="t" style="left:1435px;top:786px;font-size:12px;line-height:12px;color:#d8d8d8;letter-spacing:0.3px;">from auto-localize path</div>
<svg class="a" style="left:1579px;top:789px;" width="6" height="3" viewBox="0 0 6 3"><path d="M0 0 H6 L3.0 3 Z" fill="#d0d0d0"/></svg>
<div class="a" style="left:1593px;top:782px;width:75px;height:21px;background:#3a3a3a;border:1px solid #262626;border-radius:3px"></div>
<div class="t" style="left:1612px;top:787px;font-size:12px;line-height:12px;color:#7a7a7a;letter-spacing:0.4px;">Update</div>
<div class="t" style="right:496px;top:812px;font-size:12px;line-height:12px;color:#cfcfcf;letter-spacing:0.6px;">Format</div>
<div class="a" style="left:1430px;top:808px;width:88px;height:19px;background:#3c3c3c;border:1px solid #232323;border-radius:3px"></div>
<div class="t" style="left:1435px;top:812px;font-size:12px;line-height:12px;color:#d8d8d8;letter-spacing:0.3px;">&nbsp;4320x3240</div>
<svg class="a" style="left:1507px;top:815px;" width="6" height="3" viewBox="0 0 6 3"><path d="M0 0 H6 L3.0 3 Z" fill="#d0d0d0"/></svg>
<div class="a" style="left:1520px;top:810px;width:17px;height:16px;background:#3a3a3a;border:1px solid #232323;border-radius:3px"></div>
<div class="a" style="left:1525px;top:818px;width:7px;height:1px;background:#d0d0d0;"></div>
<div class="a" style="left:1525px;top:821px;width:7px;height:1px;background:#d0d0d0;"></div>
<div class="t" style="right:496px;top:834px;font-size:12px;line-height:12px;color:#cfcfcf;letter-spacing:0.6px;">Proxy</div>
<div class="a" style="left:1430px;top:831px;width:436px;height:19px;background:#393939;border:1px solid #232323;border-radius:3px"></div>
<div class="a" style="left:1873px;top:832px;width:15px;height:15px;background:#4a4a4a;border:1px solid #1e1e1e;border-radius:3px"></div>
<svg class="a" style="left:1874px;top:833px;" width="13" height="13" viewBox="0 0 13 13"><path d="M2 1.5 H5 L6 2.5 H12 V4 H2 Z" fill="#e8e8e8"/><path d="M1 4 H10 L12 12 H3 Z" fill="#000"/><path d="M10 4 H12 V12 Z" fill="#e0e0e0"/></svg>
<div class="t" style="right:496px;top:856px;font-size:12px;line-height:12px;color:#cfcfcf;letter-spacing:0.5px;">Proxy Format</div>
<div class="a" style="left:1430px;top:852px;width:187px;height:19px;background:#3c3c3c;border:1px solid #232323;border-radius:3px"></div>
<div class="t" style="left:1435px;top:856px;font-size:12px;line-height:12px;color:#d8d8d8;letter-spacing:0.3px;">root.proxy_format 1024x778</div>
<svg class="a" style="left:1606px;top:859px;" width="6" height="3" viewBox="0 0 6 3"><path d="M0 0 H6 L3.0 3 Z" fill="#d0d0d0"/></svg>
<div class="a" style="left:1618px;top:854px;width:17px;height:16px;background:#3a3a3a;border:1px solid #232323;border-radius:3px"></div>
<div class="a" style="left:1623px;top:862px;width:7px;height:1px;background:#d0d0d0;"></div>
<div class="a" style="left:1623px;top:865px;width:7px;height:1px;background:#d0d0d0;"></div>
<div class="t" style="right:496px;top:878px;font-size:12px;line-height:12px;color:#cfcfcf;letter-spacing:0.5px;">Frame Range</div>
<div class="a" style="left:1430px;top:874px;width:73px;height:19px;background:#393939;border:1px solid #232323;border-radius:3px"></div>
<div class="t" style="left:1434px;top:878px;font-size:12px;line-height:12px;color:#d8d8d8;letter-spacing:0.3px;">1</div>
<div class="a" style="left:1507px;top:874px;width:69px;height:19px;background:#3c3c3c;border:1px solid #232323;border-radius:3px"></div>
<div class="t" style="left:1512px;top:878px;font-size:12px;line-height:12px;color:#d8d8d8;letter-spacing:0.3px;">hold</div>
<svg class="a" style="left:1565px;top:881px;" width="6" height="3" viewBox="0 0 6 3"><path d="M0 0 H6 L3.0 3 Z" fill="#d0d0d0"/></svg>
<div class="a" style="left:1579px;top:874px;width:73px;height:19px;background:#393939;border:1px solid #232323;border-radius:3px"></div>
<div class="t" style="left:1583px;top:878px;font-size:12px;line-height:12px;color:#d8d8d8;letter-spacing:0.3px;">1</div>
<div class="a" style="left:1656px;top:874px;width:69px;height:19px;background:#3c3c3c;border:1px solid #232323;border-radius:3px"></div>
<div class="t" style="left:1661px;top:878px;font-size:12px;line-height:12px;color:#d8d8d8;letter-spacing:0.3px;">hold</div>
<svg class="a" style="left:1714px;top:881px;" width="6" height="3" viewBox="0 0 6 3"><path d="M0 0 H6 L3.0 3 Z" fill="#d0d0d0"/></svg>
<div class="t" style="right:496px;top:900px;font-size:12px;line-height:12px;color:#cfcfcf;letter-spacing:0.6px;">Frame</div>
<div class="a" style="left:1430px;top:896px;width:90px;height:19px;background:#3c3c3c;border:1px solid #232323;border-radius:3px"></div>
<div class="t" style="left:1435px;top:900px;font-size:12px;line-height:12px;color:#d8d8d8;letter-spacing:0.3px;">expression</div>
<svg class="a" style="left:1509px;top:903px;" width="6" height="3" viewBox="0 0 6 3"><path d="M0 0 H6 L3.0 3 Z" fill="#d0d0d0"/></svg>
<div class="a" style="left:1524px;top:896px;width:364px;height:19px;background:#393939;border:1px solid #232323;border-radius:3px"></div>
<div class="t" style="right:496px;top:922px;font-size:12px;line-height:12px;color:#cfcfcf;letter-spacing:0.5px;">Original Range</div>
<div class="a" style="left:1430px;top:918px;width:73px;height:19px;background:#393939;border:1px solid #232323;border-radius:3px"></div>
<div class="t" style="left:1434px;top:922px;font-size:12px;line-height:12px;color:#d8d8d8;letter-spacing:0.3px;">1</div>
<div class="a" style="left:1507px;top:918px;width:73px;height:19px;background:#393939;border:1px solid #232323;border-radius:3px"></div>
<div class="t" style="left:1511px;top:922px;font-size:12px;line-height:12px;color:#d8d8d8;letter-spacing:0.3px;">1</div>
<div class="t" style="right:496px;top:944px;font-size:12px;line-height:12px;color:#cfcfcf;letter-spacing:0.5px;">Missing Frames</div>
<div class="a" style="left:1430px;top:940px;width:109px;height:19px;background:#3c3c3c;border:1px solid #232323;border-radius:3px"></div>
<div class="t" style="left:1435px;top:944px;font-size:12px;line-height:12px;color:#d8d8d8;letter-spacing:0.3px;">error</div>
<svg class="a" style="left:1528px;top:947px;" width="6" height="3" viewBox="0 0 6 3"><path d="M0 0 H6 L3.0 3 Z" fill="#d0d0d0"/></svg>
<div class="a" style="left:1543px;top:941px;width:74px;height:21px;background:#3a3a3a;border:1px solid #262626;border-radius:3px"></div>
<div class="t" style="left:1560px;top:946px;font-size:12px;line-height:12px;color:#d8d8d8;letter-spacing:0.4px;">reload</div>
<div class="t" style="right:496px;top:969px;font-size:12px;line-height:12px;color:#cfcfcf;letter-spacing:0.5px;">Colorspace</div>
<div class="a" style="left:1430px;top:965px;width:130px;height:20px;background:#3c3c3c;border:1px solid #232323;border-radius:3px"></div>
<div class="t" style="left:1435px;top:969px;font-size:12px;line-height:12px;color:#d8d8d8;letter-spacing:0.3px;">default (sRGB)</div>
<svg class="a" style="left:1549px;top:972px;" width="6" height="3" viewBox="0 0 6 3"><path d="M0 0 H6 L3.0 3 Z" fill="#d0d0d0"/></svg>
<div class="a" style="left:1563px;top:968px;width:12px;height:12px;background:#353535;border:1px solid #232323;border-radius:2px"></div>
<div class="t" style="left:1581px;top:969px;font-size:12px;line-height:12px;color:#cfcfcf;letter-spacing:0.5px;">Premultiplied</div>
<div class="a" style="left:1663px;top:968px;width:12px;height:12px;background:#353535;border:1px solid #232323;border-radius:2px"></div>
<div class="t" style="left:1681px;top:969px;font-size:12px;line-height:12px;color:#cfcfcf;letter-spacing:0.5px;">Raw Data</div>
<div class="a" style="left:1744px;top:968px;width:12px;height:12px;background:#353535;border:1px solid #232323;border-radius:2px"></div>
<div class="t" style="left:1762px;top:969px;font-size:12px;line-height:12px;color:#cfcfcf;letter-spacing:0.5px;">Auto Alpha</div>
<div class="a" style="left:0px;top:1019px;width:1920px;height:21px;background:#323232;"></div>
<div class="t" style="right:34px;top:1023px;font-size:14px;line-height:14px;color:#d6dce8;letter-spacing:0.41px;">Localization Mode: On Memory: 1.2 GB (7.8%) CPU: 1.6% Disk: 0.0 MB/s Network: 0.0 MB/s</div>
<div class="a" style="left:1894px;top:1024px;width:26px;height:12px;background:#3cb43c;border-radius:2px"></div>
<div class="t" style="left:1900px;top:1027px;font-size:9px;line-height:9px;color:#a0f0a0;letter-spacing:0px;">OK</div>
<div class="a" style="left:0px;top:1040px;width:1920px;height:40px;background:#0c0c0c;"></div>
<svg class="a" style="left:16px;top:1052px;" width="17" height="17" viewBox="0 0 17 17"><path d="M0 2.3 L7 1.3 V8 H0 Z M8 1.1 L17 0 V8 H8 Z M0 9 H7 V15.7 L0 14.7 Z M8 9 H17 V17 L8 15.9 Z" fill="#ffffff"/></svg>
<svg class="a" style="left:63px;top:1051px;" width="18" height="18" viewBox="0 0 18 18"><rect x="1" y="3" width="12" height="10" fill="none" stroke="#fff" stroke-width="1.3"/><path d="M1 1 H13 M1 16 H13" stroke="#fff" stroke-width="1.3"/><rect x="15.5" y="1" width="1.5" height="3" fill="#fff"/><rect x="15.5" y="6" width="1.5" height="11" fill="#fff"/></svg>
<svg class="a" style="left:111px;top:1047px;" width="24" height="24" viewBox="0 0 24 24"><defs><radialGradient id="ff" cx="0.7" cy="0.2" r="0.9"><stop offset="0" stop-color="#ffe040"/><stop offset="0.4" stop-color="#ff9030"/><stop offset="0.8" stop-color="#e83050"/></radialGradient></defs><circle cx="12" cy="13" r="10.5" fill="url(#ff)"/><circle cx="12.5" cy="12.5" r="5.5" fill="#2a50c8"/><path d="M6 9 Q9 6 13 8 Q10 9 10 12 Q12 15 16 13 Q14 17 10 16 Q6 14 6 9 Z" fill="#ff8a20"/></svg>
<div class="a" style="left:103px;top:1077px;width:40px;height:3px;background:#76b9ed;"></div>
<svg class="a" style="left:161px;top:1049px;" width="22" height="22" viewBox="0 0 22 22"><path d="M0 3 H8 L10 5 H22 V20 H0 Z" fill="#f8d775"/><rect x="0" y="6" width="22" height="14" fill="#fce38a"/><path d="M6 20 V12 H16 V20 H13 V15 H9 V20 Z" fill="#2a8ae0"/></svg>
<div class="a" style="left:152px;top:1077px;width:40px;height:3px;background:#76b9ed;"></div>
<svg class="a" style="left:209px;top:1048px;" width="24" height="24" viewBox="0 0 24 24"><rect x="3" y="2" width="19" height="14" fill="#c8c8c8" stroke="#888"/><rect x="5" y="4" width="15" height="10" fill="#e8f0f8"/><path d="M5 11 L9 11 L11 6 L13 12 L15 9 L20 10" stroke="#3a70c0" stroke-width="1" fill="none"/><path d="M8 17 H17 L19 21 H6 Z" fill="#b0b0b0"/><rect x="1" y="6" width="3" height="10" fill="#a0a0a0"/><circle cx="2.5" cy="8" r="1" fill="#40c040"/></svg>
<div class="a" style="left:201px;top:1077px;width:40px;height:3px;background:#76b9ed;"></div>
<svg class="a" style="left:259px;top:1048px;" width="23" height="23" viewBox="0 0 23 23"><circle cx="11.5" cy="11.5" r="11.5" fill="#1ed760"/><path d="M5 8 Q12 5.5 18.5 9 M6 12 Q12 10 17 12.8 M7 15.8 Q12 14.3 16 16.5" stroke="#111" stroke-width="2" fill="none" stroke-linecap="round"/></svg>
<div class="a" style="left:250px;top:1077px;width:40px;height:3px;background:#76b9ed;"></div>
<svg class="a" style="left:308px;top:1049px;" width="22" height="21" viewBox="0 0 22 21"><rect x="0.8" y="0.8" width="20.4" height="19.4" fill="#1f0a3a" stroke="#b87aff" stroke-width="1.6"/><text x="3" y="15.5" font-family="Liberation Sans" font-size="12" font-weight="bold" fill="#d2a8ff">Ae</text></svg>
<div class="a" style="left:299px;top:1077px;width:40px;height:3px;background:#76b9ed;"></div>
<div class="a" style="left:344px;top:1040px;width:44px;height:40px;background:#2e2e2e;"></div>
<div class="a" style="left:388px;top:1040px;width:3px;height:40px;background:#202020;"></div>
<svg class="a" style="left:355px;top:1048px;" width="25" height="25" viewBox="0 0 25 25"><circle cx="12" cy="12" r="10.5" fill="#1a1a1a" stroke="#f5b52e" stroke-width="1.8"/><path d="M4 9 L10 3 L15 10 L12 14 Z" fill="#f5b52e"/><path d="M14 3 L20 7 L17 11 Z" fill="#f5b52e"/><path d="M11 12 L17 11 L17 18 Z" fill="#f5b52e"/><circle cx="19" cy="20" r="4" fill="#1a1a1a" stroke="#f5b52e" stroke-width="1"/><path d="M17 18 L21 22 M21 18 L17 22" stroke="#f5b52e" stroke-width="0.8"/></svg>
<div class="a" style="left:344px;top:1077px;width:44px;height:3px;background:#76b9ed;"></div>
<svg class="a" style="left:1646px;top:1056px;" width="14" height="8" viewBox="0 0 14 8"><path d="M1 7 L7 1 L13 7" stroke="#fff" stroke-width="1.2" fill="none"/></svg>
<svg class="a" style="left:1668px;top:1052px;" width="20" height="18" viewBox="0 0 20 18"><path d="M2 12 Q0 8 4 7 Q5 2 10 3 Q14 1 15 6 Q19 7 17 11 Z" fill="#e8e8e8"/><circle cx="13.5" cy="12.5" r="5" fill="#d01010"/><rect x="11" y="12" width="5" height="1.4" fill="#fff"/></svg>
<svg class="a" style="left:1692px;top:1053px;" width="18" height="13" viewBox="0 0 18 13"><path d="M1 1 V4 M4 1 V4 M0 4 H5 V7 Q5 9 2.5 9 V12" stroke="#fff" stroke-width="1.2" fill="none"/><rect x="6" y="3" width="10" height="8" fill="none" stroke="#fff" stroke-width="1.2"/><rect x="7.5" y="4.5" width="7" height="5" fill="#fff"/><rect x="16" y="5.5" width="1.5" height="3" fill="#fff"/></svg>
<svg class="a" style="left:1719px;top:1054px;" width="15" height="14" viewBox="0 0 15 14"><path d="M1 13 Q1 3 13 1 M4 13 Q4 6 13 4 M7 13 Q7 9 13 7" stroke="#fff" stroke-width="1.1" fill="none"/><circle cx="11" cy="12" r="1.3" fill="#fff"/></svg>
<svg class="a" style="left:1740px;top:1053px;" width="18" height="15" viewBox="0 0 18 15"><path d="M1 5 H4 L9 1 V14 L4 10 H1 Z" fill="none" stroke="#fff" stroke-width="1.2"/><path d="M11 5 Q13 7.5 11 10 M13 3 Q16.5 7.5 13 12 M15.5 1 Q19.5 7.5 15.5 14" stroke="#fff" stroke-width="1.1" fill="none"/></svg>
<div class="t" style="left:1767px;top:1054px;font-size:12px;line-height:12px;color:#ffffff;letter-spacing:0.2px;">ENG</div>
<div class="t" style="left:1632px;width:400px;text-align:center;top:1044px;font-size:12px;line-height:12px;color:#ffffff;letter-spacing:0px;">19:36</div>
<div class="t" style="left:1632px;width:400px;text-align:center;top:1063px;font-size:12px;line-height:12px;color:#ffffff;letter-spacing:0px;">22/12/2018</div>
<svg class="a" style="left:1878px;top:1051px;" width="20" height="20" viewBox="0 0 20 20"><path d="M1 1 H17 V12 H7 L4 16 V12 H1 Z" fill="#fff"/><path d="M4 4 H14 M4 6.5 H14 M4 9 H11" stroke="#111" stroke-width="1"/></svg>
<svg class="a" style="left:1887px;top:1059px;" width="17" height="17" viewBox="0 0 17 17"><circle cx="8.5" cy="8.5" r="7.8" fill="#333" stroke="#666" stroke-width="1"/><text x="5" y="13" font-family="Liberation Sans" font-size="12" fill="#fff">2</text></svg>
<div class="a" style="left:1916px;top:1040px;width:1px;height:40px;background:#444;"></div>
</body></html>
